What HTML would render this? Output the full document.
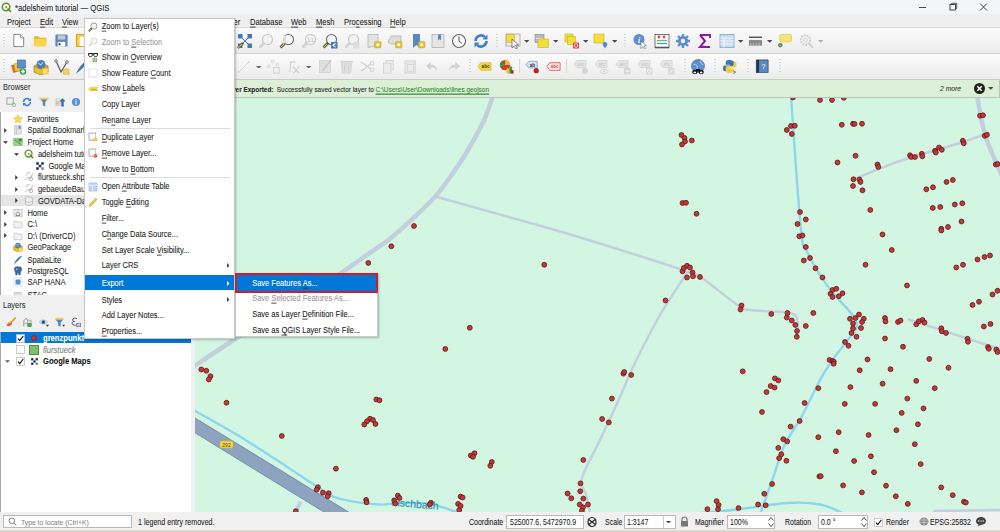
<!DOCTYPE html><html><head><meta charset="utf-8"><style>
html,body{margin:0;padding:0;width:1000px;height:532px;overflow:hidden;background:#f0f0f0;font-family:"Liberation Sans", sans-serif;}
body>div,body>svg{position:absolute;}
.t u{text-decoration-thickness:0.5px;text-underline-offset:1px;text-decoration-color:rgba(0,0,0,.6);}
.t{position:absolute;white-space:nowrap;transform:scaleY(1.18);-webkit-text-stroke:0.06px currentColor;}
</style></head><body><div style="left:0px;top:0px;width:1000px;height:14px;background:#f4f5f6"></div>
<div class="t" style="left:15px;top:-1.50px;line-height:20px;font-size:7.7px;color:#222;">*adelsheim tutorial — QGIS</div>
<div style="left:0px;top:14px;width:1000px;height:13px;background:#efefef"></div>
<div style="left:0px;top:27px;width:1000px;height:1px;background:#d9d9d9"></div>
<div class="t" style="left:7px;top:12.50px;line-height:20px;font-size:7.6px;color:#222;">Project</div>
<div class="t" style="left:40px;top:12.50px;line-height:20px;font-size:7.6px;color:#222;"><u>E</u>dit</div>
<div class="t" style="left:62px;top:12.50px;line-height:20px;font-size:7.6px;color:#222;"><u>V</u>iew</div>
<div class="t" style="left:233.5px;top:12.50px;line-height:20px;font-size:7.6px;color:#222;">er</div>
<div class="t" style="left:250px;top:12.50px;line-height:20px;font-size:7.6px;color:#222;"><u>D</u>atabase</div>
<div class="t" style="left:291px;top:12.50px;line-height:20px;font-size:7.6px;color:#222;"><u>W</u>eb</div>
<div class="t" style="left:316px;top:12.50px;line-height:20px;font-size:7.6px;color:#222;"><u>M</u>esh</div>
<div class="t" style="left:344px;top:12.50px;line-height:20px;font-size:7.6px;color:#222;">Pro<u>c</u>essing</div>
<div class="t" style="left:390px;top:12.50px;line-height:20px;font-size:7.6px;color:#222;"><u>H</u>elp</div>
<div style="left:0px;top:28px;width:1000px;height:25px;background:linear-gradient(#fbfbfb,#ececec)"></div>
<div style="left:0px;top:53px;width:1000px;height:1px;background:#d4d4d4"></div>
<div style="left:0px;top:54px;width:1000px;height:25px;background:linear-gradient(#fbfbfb,#ececec)"></div>
<div style="left:0px;top:79px;width:1000px;height:1px;background:#c8c8c8"></div>
<div style="left:0px;top:80px;width:195px;height:432px;background:#f0f0f0"></div>
<div class="t" style="left:3px;top:77.70px;line-height:20px;font-size:7.5px;color:#333;">Browser</div>
<div style="left:1px;top:112px;width:190px;height:183px;background:#fff"></div>
<div class="t" style="left:3px;top:296.20px;line-height:20px;font-size:7.5px;color:#333;">Layers</div>
<div style="left:1px;top:332px;width:190px;height:180px;background:#fff"></div>
<svg style="left:195px;top:97px" width="805" height="415" viewBox="195 97 805 415"><rect x="195" y="97" width="805" height="415" fill="#d2f6e1"/><path d="M494.0 92.0 C492.5 96.3 489.3 108.3 485.0 118.0 C480.7 127.7 473.5 140.6 468.0 150.0 C462.5 159.4 457.3 166.9 452.0 174.4 C446.7 181.9 442.5 188.3 436.4 195.2 C430.3 202.1 423.2 208.9 415.6 216.0 C408.0 223.1 399.1 231.5 391.0 238.0 C382.9 244.5 374.8 249.3 366.7 255.0 C358.6 260.7 355.0 263.9 342.2 272.2 C329.4 280.5 307.4 294.1 290.0 305.0 C272.6 315.9 254.2 326.8 237.5 337.5 C220.8 348.2 197.9 363.8 190.0 369.0" fill="none" stroke="#c3cfdd" stroke-width="4.5" stroke-linecap="round"/><path d="M977.0 95.0 C977.5 97.8 978.7 105.3 980.0 112.0 C981.3 118.7 982.5 127.0 985.0 135.0 C987.5 143.0 992.0 152.8 995.0 160.0 C998.0 167.2 1001.7 175.0 1003.0 178.0" fill="none" stroke="#c3cfdd" stroke-width="4.5" stroke-linecap="round"/><path d="M437.0 197.0 C456.7 202.5 522.0 220.4 555.0 230.0 C588.0 239.6 613.2 247.7 635.0 254.5 C656.8 261.3 677.5 268.2 686.0 271.0" fill="none" stroke="#c3cfdd" stroke-width="2.4" stroke-linecap="round"/><path d="M687.0 273.0 C682.5 280.0 668.7 300.0 660.0 315.0 C651.3 330.0 641.7 349.3 635.0 363.0 C628.3 376.7 625.8 384.2 620.0 397.0 C614.2 409.8 606.3 426.5 600.0 440.0 C593.7 453.5 584.3 468.8 582.0 478.0 C579.7 487.2 584.7 489.3 586.0 495.0 C587.3 500.7 589.3 509.2 590.0 512.0" fill="none" stroke="#c3cfdd" stroke-width="2.4" stroke-linecap="round"/><path d="M688.0 272.0 C690.3 273.0 693.8 272.5 702.0 278.0 C710.2 283.5 729.5 299.7 737.5 305.0 C745.5 310.3 741.2 308.7 750.0 310.0 C758.8 311.3 782.1 311.2 790.0 313.0 C797.9 314.8 796.3 317.2 797.5 321.0 C798.7 324.8 797.1 333.5 797.0 336.0" fill="none" stroke="#c3cfdd" stroke-width="2.4" stroke-linecap="round"/><path d="M857.0 178.0 C864.2 175.2 882.8 166.8 900.0 161.0 C917.2 155.2 945.8 147.5 960.0 143.0 C974.2 138.5 980.8 135.5 985.0 134.0" fill="none" stroke="#c3cfdd" stroke-width="2.4" stroke-linecap="round"/><path d="M908.8 319.5 C923.2 324.2 979.3 342.6 995.0 347.5 C1010.7 352.4 1001.7 348.8 1003.0 349.0" fill="none" stroke="#c3cfdd" stroke-width="2.4" stroke-linecap="round"/><path d="M934.5 511.0 C945.4 510.8 989.1 510.2 1000.0 510.0" fill="none" stroke="#c3cfdd" stroke-width="2.4" stroke-linecap="round"/><path d="M300.6 501.6 L295 514" fill="none" stroke="#c3cfdd" stroke-width="4"/><path d="M791.0 97.0 C792.7 119.2 798.2 204.1 801.0 230.0 C803.8 255.9 804.3 245.0 807.5 252.5 C810.7 260.0 815.8 268.3 820.0 275.0 C824.2 281.7 827.1 285.8 832.5 292.5 C837.9 299.2 848.4 309.2 852.5 315.0 C856.6 320.8 857.4 323.3 857.0 327.0 C856.6 330.7 854.1 331.5 850.0 337.0 C845.9 342.5 837.5 352.8 832.5 360.0 C827.5 367.2 825.1 370.7 820.0 380.0 C814.9 389.3 807.8 405.3 802.0 416.0 C796.2 426.7 789.7 434.2 785.0 444.0 C780.3 453.8 777.7 464.7 774.0 475.0 C770.3 485.3 765.3 499.5 763.0 506.0 C760.7 512.5 760.5 512.7 760.0 514.0" fill="none" stroke="#8ad6ee" stroke-width="2.3" stroke-linecap="round"/><path d="M188.0 406.8 C189.2 407.5 186.4 406.0 195.5 411.2 C204.6 416.4 227.3 428.9 242.6 438.2 C257.9 447.5 275.3 459.2 287.4 467.1 C299.5 475.0 307.4 480.6 315.0 485.5 C322.6 490.4 327.2 493.9 333.3 496.5 C339.4 499.1 343.9 500.0 351.7 501.3 C359.5 502.6 372.1 504.2 380.0 504.5 C387.9 504.8 390.7 503.1 399.0 503.0 C407.3 502.9 420.5 502.5 430.0 504.0 C439.5 505.5 449.3 509.7 456.0 512.0 C462.7 514.3 467.7 517.0 470.0 518.0" fill="none" stroke="#8ad6ee" stroke-width="2.3" stroke-linecap="round"/><path d="M690.0 514.0 C697.0 513.3 715.7 511.8 732.0 510.0 C748.3 508.2 773.3 503.9 788.0 503.0 C802.7 502.1 810.5 502.7 820.0 504.5 C829.5 506.3 840.8 512.4 845.0 514.0" fill="none" stroke="#8ad6ee" stroke-width="2.3" stroke-linecap="round"/><path d="M180 416.2 L370 532.7" fill="none" stroke="#7189aa" stroke-width="13.6"/><path d="M180 416.2 L370 532.7" fill="none" stroke="#8ea3c0" stroke-width="12.2"/><rect x="220" y="441" width="13" height="7" rx="1.5" fill="#f3d54a" stroke="#d9b52a" stroke-width="0.6"/><text x="226.5" y="446.6" font-size="5" text-anchor="middle" fill="#5a4a10" font-family="Liberation Sans">292</text><text x="391" y="505.5" font-size="10.4" fill="#2b93b8" stroke="#2b93b8" stroke-width="0.2" font-family="Liberation Sans" transform="rotate(5 391 505.5)">Fischbach</text><circle cx="414" cy="226" r="2.45" fill="#c23838" stroke="#5e1616" stroke-width="0.8"/><circle cx="681.5" cy="135" r="2.45" fill="#c23838" stroke="#5e1616" stroke-width="0.8"/><circle cx="684.5" cy="138" r="2.45" fill="#c23838" stroke="#5e1616" stroke-width="0.8"/><circle cx="685" cy="141.5" r="2.45" fill="#c23838" stroke="#5e1616" stroke-width="0.8"/><circle cx="682" cy="144.5" r="2.45" fill="#c23838" stroke="#5e1616" stroke-width="0.8"/><circle cx="691.8" cy="140.5" r="2.45" fill="#c23838" stroke="#5e1616" stroke-width="0.8"/><circle cx="793" cy="97.5" r="2.45" fill="#c23838" stroke="#5e1616" stroke-width="0.8"/><circle cx="820" cy="100" r="2.45" fill="#c23838" stroke="#5e1616" stroke-width="0.8"/><circle cx="832" cy="100" r="2.45" fill="#c23838" stroke="#5e1616" stroke-width="0.8"/><circle cx="786.8" cy="130" r="2.45" fill="#c23838" stroke="#5e1616" stroke-width="0.8"/><circle cx="791" cy="126" r="2.45" fill="#c23838" stroke="#5e1616" stroke-width="0.8"/><circle cx="794.8" cy="125.8" r="2.45" fill="#c23838" stroke="#5e1616" stroke-width="0.8"/><circle cx="791.8" cy="134" r="2.45" fill="#c23838" stroke="#5e1616" stroke-width="0.8"/><circle cx="682.5" cy="203" r="2.45" fill="#c23838" stroke="#5e1616" stroke-width="0.8"/><circle cx="686" cy="202.8" r="2.45" fill="#c23838" stroke="#5e1616" stroke-width="0.8"/><circle cx="696.5" cy="213.8" r="2.45" fill="#c23838" stroke="#5e1616" stroke-width="0.8"/><circle cx="800" cy="212" r="2.45" fill="#c23838" stroke="#5e1616" stroke-width="0.8"/><circle cx="805.8" cy="219.5" r="2.45" fill="#c23838" stroke="#5e1616" stroke-width="0.8"/><circle cx="797.5" cy="224" r="2.45" fill="#c23838" stroke="#5e1616" stroke-width="0.8"/><circle cx="843.8" cy="97.8" r="2.45" fill="#c23838" stroke="#5e1616" stroke-width="0.8"/><circle cx="841.8" cy="124.8" r="2.45" fill="#c23838" stroke="#5e1616" stroke-width="0.8"/><circle cx="853" cy="123.8" r="2.45" fill="#c23838" stroke="#5e1616" stroke-width="0.8"/><circle cx="854.5" cy="124" r="2.45" fill="#c23838" stroke="#5e1616" stroke-width="0.8"/><circle cx="862" cy="123.8" r="2.45" fill="#c23838" stroke="#5e1616" stroke-width="0.8"/><circle cx="855.5" cy="155.8" r="2.45" fill="#c23838" stroke="#5e1616" stroke-width="0.8"/><circle cx="837.5" cy="162.5" r="2.45" fill="#c23838" stroke="#5e1616" stroke-width="0.8"/><circle cx="877.5" cy="164.5" r="2.45" fill="#c23838" stroke="#5e1616" stroke-width="0.8"/><circle cx="878.3" cy="167" r="2.45" fill="#c23838" stroke="#5e1616" stroke-width="0.8"/><circle cx="910" cy="155.3" r="2.45" fill="#c23838" stroke="#5e1616" stroke-width="0.8"/><circle cx="911.3" cy="157" r="2.45" fill="#c23838" stroke="#5e1616" stroke-width="0.8"/><circle cx="915" cy="157" r="2.45" fill="#c23838" stroke="#5e1616" stroke-width="0.8"/><circle cx="921.8" cy="153.8" r="2.45" fill="#c23838" stroke="#5e1616" stroke-width="0.8"/><circle cx="922.3" cy="156.3" r="2.45" fill="#c23838" stroke="#5e1616" stroke-width="0.8"/><circle cx="935" cy="150.8" r="2.45" fill="#c23838" stroke="#5e1616" stroke-width="0.8"/><circle cx="935.8" cy="152.5" r="2.45" fill="#c23838" stroke="#5e1616" stroke-width="0.8"/><circle cx="939" cy="147.5" r="2.45" fill="#c23838" stroke="#5e1616" stroke-width="0.8"/><circle cx="941.8" cy="149.8" r="2.45" fill="#c23838" stroke="#5e1616" stroke-width="0.8"/><circle cx="962.8" cy="140.8" r="2.45" fill="#c23838" stroke="#5e1616" stroke-width="0.8"/><circle cx="963.8" cy="143.3" r="2.45" fill="#c23838" stroke="#5e1616" stroke-width="0.8"/><circle cx="980" cy="115.8" r="2.45" fill="#c23838" stroke="#5e1616" stroke-width="0.8"/><circle cx="983" cy="115.3" r="2.45" fill="#c23838" stroke="#5e1616" stroke-width="0.8"/><circle cx="984.8" cy="135.8" r="2.45" fill="#c23838" stroke="#5e1616" stroke-width="0.8"/><circle cx="987" cy="134.8" r="2.45" fill="#c23838" stroke="#5e1616" stroke-width="0.8"/><circle cx="995.8" cy="164.5" r="2.45" fill="#c23838" stroke="#5e1616" stroke-width="0.8"/><circle cx="997.5" cy="164" r="2.45" fill="#c23838" stroke="#5e1616" stroke-width="0.8"/><circle cx="853.5" cy="179.3" r="2.45" fill="#c23838" stroke="#5e1616" stroke-width="0.8"/><circle cx="859.5" cy="179.5" r="2.45" fill="#c23838" stroke="#5e1616" stroke-width="0.8"/><circle cx="860.5" cy="182" r="2.45" fill="#c23838" stroke="#5e1616" stroke-width="0.8"/><circle cx="853" cy="186" r="2.45" fill="#c23838" stroke="#5e1616" stroke-width="0.8"/><circle cx="862.5" cy="190.3" r="2.45" fill="#c23838" stroke="#5e1616" stroke-width="0.8"/><circle cx="870.3" cy="210" r="2.45" fill="#c23838" stroke="#5e1616" stroke-width="0.8"/><circle cx="926.3" cy="189.3" r="2.45" fill="#c23838" stroke="#5e1616" stroke-width="0.8"/><circle cx="933" cy="187.3" r="2.45" fill="#c23838" stroke="#5e1616" stroke-width="0.8"/><circle cx="946.5" cy="182" r="2.45" fill="#c23838" stroke="#5e1616" stroke-width="0.8"/><circle cx="952.8" cy="180" r="2.45" fill="#c23838" stroke="#5e1616" stroke-width="0.8"/><circle cx="932.8" cy="208" r="2.45" fill="#c23838" stroke="#5e1616" stroke-width="0.8"/><circle cx="940.3" cy="207" r="2.45" fill="#c23838" stroke="#5e1616" stroke-width="0.8"/><circle cx="954.8" cy="204.5" r="2.45" fill="#c23838" stroke="#5e1616" stroke-width="0.8"/><circle cx="962.3" cy="203.3" r="2.45" fill="#c23838" stroke="#5e1616" stroke-width="0.8"/><circle cx="961.5" cy="221.5" r="2.45" fill="#c23838" stroke="#5e1616" stroke-width="0.8"/><circle cx="941.3" cy="228.8" r="2.45" fill="#c23838" stroke="#5e1616" stroke-width="0.8"/><circle cx="948" cy="227" r="2.45" fill="#c23838" stroke="#5e1616" stroke-width="0.8"/><circle cx="391.3" cy="246.3" r="2.45" fill="#c23838" stroke="#5e1616" stroke-width="0.8"/><circle cx="368.3" cy="263" r="2.45" fill="#c23838" stroke="#5e1616" stroke-width="0.8"/><circle cx="201.3" cy="369.5" r="2.45" fill="#c23838" stroke="#5e1616" stroke-width="0.8"/><circle cx="206.3" cy="370.8" r="2.45" fill="#c23838" stroke="#5e1616" stroke-width="0.8"/><circle cx="210.5" cy="376.3" r="2.45" fill="#c23838" stroke="#5e1616" stroke-width="0.8"/><circle cx="208.8" cy="379.5" r="2.45" fill="#c23838" stroke="#5e1616" stroke-width="0.8"/><circle cx="226.5" cy="402.8" r="2.45" fill="#c23838" stroke="#5e1616" stroke-width="0.8"/><circle cx="281.8" cy="436" r="2.45" fill="#c23838" stroke="#5e1616" stroke-width="0.8"/><circle cx="376.3" cy="399.5" r="2.45" fill="#c23838" stroke="#5e1616" stroke-width="0.8"/><circle cx="379.5" cy="400.3" r="2.45" fill="#c23838" stroke="#5e1616" stroke-width="0.8"/><circle cx="370" cy="418.8" r="2.45" fill="#c23838" stroke="#5e1616" stroke-width="0.8"/><circle cx="367" cy="421.3" r="2.45" fill="#c23838" stroke="#5e1616" stroke-width="0.8"/><circle cx="364.3" cy="424.5" r="2.45" fill="#c23838" stroke="#5e1616" stroke-width="0.8"/><circle cx="373" cy="420" r="2.45" fill="#c23838" stroke="#5e1616" stroke-width="0.8"/><circle cx="375.5" cy="424" r="2.45" fill="#c23838" stroke="#5e1616" stroke-width="0.8"/><circle cx="445.3" cy="349" r="2.45" fill="#c23838" stroke="#5e1616" stroke-width="0.8"/><circle cx="470.8" cy="455.5" r="2.45" fill="#c23838" stroke="#5e1616" stroke-width="0.8"/><circle cx="474.5" cy="453.3" r="2.45" fill="#c23838" stroke="#5e1616" stroke-width="0.8"/><circle cx="473" cy="456.8" r="2.45" fill="#c23838" stroke="#5e1616" stroke-width="0.8"/><circle cx="491.8" cy="462" r="2.45" fill="#c23838" stroke="#5e1616" stroke-width="0.8"/><circle cx="583.3" cy="460" r="2.45" fill="#c23838" stroke="#5e1616" stroke-width="0.8"/><circle cx="544.3" cy="264.8" r="2.45" fill="#c23838" stroke="#5e1616" stroke-width="0.8"/><circle cx="469.8" cy="327.8" r="2.45" fill="#c23838" stroke="#5e1616" stroke-width="0.8"/><circle cx="799.3" cy="236.3" r="2.45" fill="#c23838" stroke="#5e1616" stroke-width="0.8"/><circle cx="802.5" cy="235.5" r="2.45" fill="#c23838" stroke="#5e1616" stroke-width="0.8"/><circle cx="805.8" cy="247" r="2.45" fill="#c23838" stroke="#5e1616" stroke-width="0.8"/><circle cx="810" cy="258" r="2.45" fill="#c23838" stroke="#5e1616" stroke-width="0.8"/><circle cx="803.8" cy="260.5" r="2.45" fill="#c23838" stroke="#5e1616" stroke-width="0.8"/><circle cx="815.5" cy="268.3" r="2.45" fill="#c23838" stroke="#5e1616" stroke-width="0.8"/><circle cx="822.5" cy="277.5" r="2.45" fill="#c23838" stroke="#5e1616" stroke-width="0.8"/><circle cx="832.5" cy="290" r="2.45" fill="#c23838" stroke="#5e1616" stroke-width="0.8"/><circle cx="830.5" cy="293.8" r="2.45" fill="#c23838" stroke="#5e1616" stroke-width="0.8"/><circle cx="832.5" cy="297" r="2.45" fill="#c23838" stroke="#5e1616" stroke-width="0.8"/><circle cx="682.5" cy="271.3" r="2.45" fill="#c23838" stroke="#5e1616" stroke-width="0.8"/><circle cx="683.8" cy="268" r="2.45" fill="#c23838" stroke="#5e1616" stroke-width="0.8"/><circle cx="687" cy="265.8" r="2.45" fill="#c23838" stroke="#5e1616" stroke-width="0.8"/><circle cx="690" cy="267.5" r="2.45" fill="#c23838" stroke="#5e1616" stroke-width="0.8"/><circle cx="692.5" cy="272.5" r="2.45" fill="#c23838" stroke="#5e1616" stroke-width="0.8"/><circle cx="693" cy="276.3" r="2.45" fill="#c23838" stroke="#5e1616" stroke-width="0.8"/><circle cx="687" cy="277.5" r="2.45" fill="#c23838" stroke="#5e1616" stroke-width="0.8"/><circle cx="700" cy="277" r="2.45" fill="#c23838" stroke="#5e1616" stroke-width="0.8"/><circle cx="665.5" cy="300.5" r="2.45" fill="#c23838" stroke="#5e1616" stroke-width="0.8"/><circle cx="741.5" cy="305.5" r="2.45" fill="#c23838" stroke="#5e1616" stroke-width="0.8"/><circle cx="740.5" cy="309.5" r="2.45" fill="#c23838" stroke="#5e1616" stroke-width="0.8"/><circle cx="771.3" cy="314" r="2.45" fill="#c23838" stroke="#5e1616" stroke-width="0.8"/><circle cx="787.5" cy="313" r="2.45" fill="#c23838" stroke="#5e1616" stroke-width="0.8"/><circle cx="786.8" cy="317.5" r="2.45" fill="#c23838" stroke="#5e1616" stroke-width="0.8"/><circle cx="791.8" cy="320.5" r="2.45" fill="#c23838" stroke="#5e1616" stroke-width="0.8"/><circle cx="795.3" cy="325" r="2.45" fill="#c23838" stroke="#5e1616" stroke-width="0.8"/><circle cx="797" cy="331" r="2.45" fill="#c23838" stroke="#5e1616" stroke-width="0.8"/><circle cx="796.8" cy="336.8" r="2.45" fill="#c23838" stroke="#5e1616" stroke-width="0.8"/><circle cx="813.3" cy="313" r="2.45" fill="#c23838" stroke="#5e1616" stroke-width="0.8"/><circle cx="805.8" cy="326" r="2.45" fill="#c23838" stroke="#5e1616" stroke-width="0.8"/><circle cx="829.5" cy="360" r="2.45" fill="#c23838" stroke="#5e1616" stroke-width="0.8"/><circle cx="832.5" cy="361" r="2.45" fill="#c23838" stroke="#5e1616" stroke-width="0.8"/><circle cx="836.3" cy="288.8" r="2.45" fill="#c23838" stroke="#5e1616" stroke-width="0.8"/><circle cx="838.8" cy="296.3" r="2.45" fill="#c23838" stroke="#5e1616" stroke-width="0.8"/><circle cx="842.5" cy="293.3" r="2.45" fill="#c23838" stroke="#5e1616" stroke-width="0.8"/><circle cx="882.5" cy="234.5" r="2.45" fill="#c23838" stroke="#5e1616" stroke-width="0.8"/><circle cx="891.8" cy="250" r="2.45" fill="#c23838" stroke="#5e1616" stroke-width="0.8"/><circle cx="865.5" cy="264.8" r="2.45" fill="#c23838" stroke="#5e1616" stroke-width="0.8"/><circle cx="941.3" cy="230.5" r="2.45" fill="#c23838" stroke="#5e1616" stroke-width="0.8"/><circle cx="956.3" cy="267.5" r="2.45" fill="#c23838" stroke="#5e1616" stroke-width="0.8"/><circle cx="963" cy="264.8" r="2.45" fill="#c23838" stroke="#5e1616" stroke-width="0.8"/><circle cx="977.5" cy="259.5" r="2.45" fill="#c23838" stroke="#5e1616" stroke-width="0.8"/><circle cx="984.5" cy="257" r="2.45" fill="#c23838" stroke="#5e1616" stroke-width="0.8"/><circle cx="990" cy="255.5" r="2.45" fill="#c23838" stroke="#5e1616" stroke-width="0.8"/><circle cx="907" cy="285.5" r="2.45" fill="#c23838" stroke="#5e1616" stroke-width="0.8"/><circle cx="992.5" cy="294.5" r="2.45" fill="#c23838" stroke="#5e1616" stroke-width="0.8"/><circle cx="997.5" cy="290.8" r="2.45" fill="#c23838" stroke="#5e1616" stroke-width="0.8"/><circle cx="972.5" cy="305" r="2.45" fill="#c23838" stroke="#5e1616" stroke-width="0.8"/><circle cx="979" cy="301.8" r="2.45" fill="#c23838" stroke="#5e1616" stroke-width="0.8"/><circle cx="850" cy="318.8" r="2.45" fill="#c23838" stroke="#5e1616" stroke-width="0.8"/><circle cx="855.5" cy="318" r="2.45" fill="#c23838" stroke="#5e1616" stroke-width="0.8"/><circle cx="859" cy="314.5" r="2.45" fill="#c23838" stroke="#5e1616" stroke-width="0.8"/><circle cx="863.8" cy="318.8" r="2.45" fill="#c23838" stroke="#5e1616" stroke-width="0.8"/><circle cx="862" cy="322" r="2.45" fill="#c23838" stroke="#5e1616" stroke-width="0.8"/><circle cx="853" cy="323.5" r="2.45" fill="#c23838" stroke="#5e1616" stroke-width="0.8"/><circle cx="861" cy="328" r="2.45" fill="#c23838" stroke="#5e1616" stroke-width="0.8"/><circle cx="853" cy="328.3" r="2.45" fill="#c23838" stroke="#5e1616" stroke-width="0.8"/><circle cx="851.5" cy="333" r="2.45" fill="#c23838" stroke="#5e1616" stroke-width="0.8"/><circle cx="856.5" cy="336.8" r="2.45" fill="#c23838" stroke="#5e1616" stroke-width="0.8"/><circle cx="845" cy="342" r="2.45" fill="#c23838" stroke="#5e1616" stroke-width="0.8"/><circle cx="848.5" cy="345.8" r="2.45" fill="#c23838" stroke="#5e1616" stroke-width="0.8"/><circle cx="885" cy="318" r="2.45" fill="#c23838" stroke="#5e1616" stroke-width="0.8"/><circle cx="885.5" cy="321.5" r="2.45" fill="#c23838" stroke="#5e1616" stroke-width="0.8"/><circle cx="898" cy="322" r="2.45" fill="#c23838" stroke="#5e1616" stroke-width="0.8"/><circle cx="900.5" cy="320.5" r="2.45" fill="#c23838" stroke="#5e1616" stroke-width="0.8"/><circle cx="916.3" cy="324.3" r="2.45" fill="#c23838" stroke="#5e1616" stroke-width="0.8"/><circle cx="918.8" cy="321.3" r="2.45" fill="#c23838" stroke="#5e1616" stroke-width="0.8"/><circle cx="922.5" cy="320" r="2.45" fill="#c23838" stroke="#5e1616" stroke-width="0.8"/><circle cx="924.5" cy="322.5" r="2.45" fill="#c23838" stroke="#5e1616" stroke-width="0.8"/><circle cx="941.3" cy="328.3" r="2.45" fill="#c23838" stroke="#5e1616" stroke-width="0.8"/><circle cx="941.8" cy="331.3" r="2.45" fill="#c23838" stroke="#5e1616" stroke-width="0.8"/><circle cx="946" cy="333" r="2.45" fill="#c23838" stroke="#5e1616" stroke-width="0.8"/><circle cx="967.5" cy="338.8" r="2.45" fill="#c23838" stroke="#5e1616" stroke-width="0.8"/><circle cx="968" cy="341.8" r="2.45" fill="#c23838" stroke="#5e1616" stroke-width="0.8"/><circle cx="983.8" cy="326.5" r="2.45" fill="#c23838" stroke="#5e1616" stroke-width="0.8"/><circle cx="990.5" cy="324" r="2.45" fill="#c23838" stroke="#5e1616" stroke-width="0.8"/><circle cx="988" cy="347" r="2.45" fill="#c23838" stroke="#5e1616" stroke-width="0.8"/><circle cx="988.8" cy="348.8" r="2.45" fill="#c23838" stroke="#5e1616" stroke-width="0.8"/><circle cx="996.3" cy="349.5" r="2.45" fill="#c23838" stroke="#5e1616" stroke-width="0.8"/><circle cx="997.5" cy="352" r="2.45" fill="#c23838" stroke="#5e1616" stroke-width="0.8"/><circle cx="885" cy="338.5" r="2.45" fill="#c23838" stroke="#5e1616" stroke-width="0.8"/><circle cx="903" cy="346.8" r="2.45" fill="#c23838" stroke="#5e1616" stroke-width="0.8"/><circle cx="867.5" cy="359.5" r="2.45" fill="#c23838" stroke="#5e1616" stroke-width="0.8"/><circle cx="929.3" cy="359" r="2.45" fill="#c23838" stroke="#5e1616" stroke-width="0.8"/><circle cx="833.8" cy="361.8" r="2.45" fill="#c23838" stroke="#5e1616" stroke-width="0.8"/><circle cx="335.9" cy="468.7" r="2.45" fill="#c23838" stroke="#5e1616" stroke-width="0.8"/><circle cx="317.9" cy="487.2" r="2.45" fill="#c23838" stroke="#5e1616" stroke-width="0.8"/><circle cx="316.7" cy="489.6" r="2.45" fill="#c23838" stroke="#5e1616" stroke-width="0.8"/><circle cx="322.9" cy="492.7" r="2.45" fill="#c23838" stroke="#5e1616" stroke-width="0.8"/><circle cx="328.7" cy="493.2" r="2.45" fill="#c23838" stroke="#5e1616" stroke-width="0.8"/><circle cx="327.7" cy="496.3" r="2.45" fill="#c23838" stroke="#5e1616" stroke-width="0.8"/><circle cx="366.1" cy="499.9" r="2.45" fill="#c23838" stroke="#5e1616" stroke-width="0.8"/><circle cx="366.6" cy="502.3" r="2.45" fill="#c23838" stroke="#5e1616" stroke-width="0.8"/><circle cx="394.2" cy="500.4" r="2.45" fill="#c23838" stroke="#5e1616" stroke-width="0.8"/><circle cx="397.8" cy="495.6" r="2.45" fill="#c23838" stroke="#5e1616" stroke-width="0.8"/><circle cx="399.5" cy="498" r="2.45" fill="#c23838" stroke="#5e1616" stroke-width="0.8"/><circle cx="395.4" cy="503.5" r="2.45" fill="#c23838" stroke="#5e1616" stroke-width="0.8"/><circle cx="430.9" cy="502.8" r="2.45" fill="#c23838" stroke="#5e1616" stroke-width="0.8"/><circle cx="429.7" cy="504.5" r="2.45" fill="#c23838" stroke="#5e1616" stroke-width="0.8"/><circle cx="295.8" cy="511.2" r="2.45" fill="#c23838" stroke="#5e1616" stroke-width="0.8"/><circle cx="611.9" cy="398.6" r="2.45" fill="#c23838" stroke="#5e1616" stroke-width="0.8"/><circle cx="602.1" cy="419" r="2.45" fill="#c23838" stroke="#5e1616" stroke-width="0.8"/><circle cx="608.8" cy="422.4" r="2.45" fill="#c23838" stroke="#5e1616" stroke-width="0.8"/><circle cx="580.5" cy="483.4" r="2.45" fill="#c23838" stroke="#5e1616" stroke-width="0.8"/><circle cx="567.6" cy="493.5" r="2.45" fill="#c23838" stroke="#5e1616" stroke-width="0.8"/><circle cx="571.3" cy="498.3" r="2.45" fill="#c23838" stroke="#5e1616" stroke-width="0.8"/><circle cx="580.2" cy="491.3" r="2.45" fill="#c23838" stroke="#5e1616" stroke-width="0.8"/><circle cx="583.3" cy="498.6" r="2.45" fill="#c23838" stroke="#5e1616" stroke-width="0.8"/><circle cx="579.7" cy="504.5" r="2.45" fill="#c23838" stroke="#5e1616" stroke-width="0.8"/><circle cx="588" cy="504.5" r="2.45" fill="#c23838" stroke="#5e1616" stroke-width="0.8"/><circle cx="583" cy="507.3" r="2.45" fill="#c23838" stroke="#5e1616" stroke-width="0.8"/><circle cx="581.9" cy="510.6" r="2.45" fill="#c23838" stroke="#5e1616" stroke-width="0.8"/><circle cx="490.3" cy="465.8" r="2.45" fill="#c23838" stroke="#5e1616" stroke-width="0.8"/><circle cx="460.6" cy="496.6" r="2.45" fill="#c23838" stroke="#5e1616" stroke-width="0.8"/><circle cx="462.6" cy="497.5" r="2.45" fill="#c23838" stroke="#5e1616" stroke-width="0.8"/><circle cx="458.1" cy="503.9" r="2.45" fill="#c23838" stroke="#5e1616" stroke-width="0.8"/><circle cx="460.6" cy="505.9" r="2.45" fill="#c23838" stroke="#5e1616" stroke-width="0.8"/><circle cx="459.2" cy="510" r="2.45" fill="#c23838" stroke="#5e1616" stroke-width="0.8"/><circle cx="623.4" cy="373.6" r="2.45" fill="#c23838" stroke="#5e1616" stroke-width="0.8"/><circle cx="624.2" cy="372" r="2.45" fill="#c23838" stroke="#5e1616" stroke-width="0.8"/><circle cx="631.2" cy="375" r="2.45" fill="#c23838" stroke="#5e1616" stroke-width="0.8"/><circle cx="742.7" cy="371.4" r="2.45" fill="#c23838" stroke="#5e1616" stroke-width="0.8"/><circle cx="774.9" cy="378.4" r="2.45" fill="#c23838" stroke="#5e1616" stroke-width="0.8"/><circle cx="778.3" cy="380.4" r="2.45" fill="#c23838" stroke="#5e1616" stroke-width="0.8"/><circle cx="770.7" cy="386" r="2.45" fill="#c23838" stroke="#5e1616" stroke-width="0.8"/><circle cx="774.6" cy="387.6" r="2.45" fill="#c23838" stroke="#5e1616" stroke-width="0.8"/><circle cx="766.5" cy="392.1" r="2.45" fill="#c23838" stroke="#5e1616" stroke-width="0.8"/><circle cx="762" cy="412" r="2.45" fill="#c23838" stroke="#5e1616" stroke-width="0.8"/><circle cx="818.3" cy="388.2" r="2.45" fill="#c23838" stroke="#5e1616" stroke-width="0.8"/><circle cx="804.6" cy="403" r="2.45" fill="#c23838" stroke="#5e1616" stroke-width="0.8"/><circle cx="799.6" cy="421" r="2.45" fill="#c23838" stroke="#5e1616" stroke-width="0.8"/><circle cx="790.6" cy="426.6" r="2.45" fill="#c23838" stroke="#5e1616" stroke-width="0.8"/><circle cx="783.3" cy="439.2" r="2.45" fill="#c23838" stroke="#5e1616" stroke-width="0.8"/><circle cx="787.2" cy="441.4" r="2.45" fill="#c23838" stroke="#5e1616" stroke-width="0.8"/><circle cx="778.3" cy="447.9" r="2.45" fill="#c23838" stroke="#5e1616" stroke-width="0.8"/><circle cx="781.3" cy="454.3" r="2.45" fill="#c23838" stroke="#5e1616" stroke-width="0.8"/><circle cx="779.1" cy="458.2" r="2.45" fill="#c23838" stroke="#5e1616" stroke-width="0.8"/><circle cx="786.4" cy="460.8" r="2.45" fill="#c23838" stroke="#5e1616" stroke-width="0.8"/><circle cx="818.3" cy="437.2" r="2.45" fill="#c23838" stroke="#5e1616" stroke-width="0.8"/><circle cx="819.4" cy="476.4" r="2.45" fill="#c23838" stroke="#5e1616" stroke-width="0.8"/><circle cx="772.1" cy="484" r="2.45" fill="#c23838" stroke="#5e1616" stroke-width="0.8"/><circle cx="764.3" cy="493.8" r="2.45" fill="#c23838" stroke="#5e1616" stroke-width="0.8"/><circle cx="758.1" cy="504.5" r="2.45" fill="#c23838" stroke="#5e1616" stroke-width="0.8"/><circle cx="765.7" cy="505.3" r="2.45" fill="#c23838" stroke="#5e1616" stroke-width="0.8"/><circle cx="738.5" cy="508.1" r="2.45" fill="#c23838" stroke="#5e1616" stroke-width="0.8"/><circle cx="716.6" cy="501.1" r="2.45" fill="#c23838" stroke="#5e1616" stroke-width="0.8"/><circle cx="718.6" cy="505" r="2.45" fill="#c23838" stroke="#5e1616" stroke-width="0.8"/><circle cx="718" cy="509.2" r="2.45" fill="#c23838" stroke="#5e1616" stroke-width="0.8"/><circle cx="707.4" cy="509.2" r="2.45" fill="#c23838" stroke="#5e1616" stroke-width="0.8"/><circle cx="833.6" cy="363.8" r="2.45" fill="#c23838" stroke="#5e1616" stroke-width="0.8"/><circle cx="859.7" cy="370.3" r="2.45" fill="#c23838" stroke="#5e1616" stroke-width="0.8"/><circle cx="890.5" cy="369.2" r="2.45" fill="#c23838" stroke="#5e1616" stroke-width="0.8"/><circle cx="948.5" cy="367.8" r="2.45" fill="#c23838" stroke="#5e1616" stroke-width="0.8"/><circle cx="850.4" cy="387.1" r="2.45" fill="#c23838" stroke="#5e1616" stroke-width="0.8"/><circle cx="882.6" cy="383.7" r="2.45" fill="#c23838" stroke="#5e1616" stroke-width="0.8"/><circle cx="916.2" cy="380.9" r="2.45" fill="#c23838" stroke="#5e1616" stroke-width="0.8"/><circle cx="934.7" cy="388.2" r="2.45" fill="#c23838" stroke="#5e1616" stroke-width="0.8"/><circle cx="844.8" cy="403.9" r="2.45" fill="#c23838" stroke="#5e1616" stroke-width="0.8"/><circle cx="875.1" cy="403.9" r="2.45" fill="#c23838" stroke="#5e1616" stroke-width="0.8"/><circle cx="907.3" cy="398.6" r="2.45" fill="#c23838" stroke="#5e1616" stroke-width="0.8"/><circle cx="923.5" cy="408.4" r="2.45" fill="#c23838" stroke="#5e1616" stroke-width="0.8"/><circle cx="901.7" cy="412.9" r="2.45" fill="#c23838" stroke="#5e1616" stroke-width="0.8"/><circle cx="917.9" cy="424.3" r="2.45" fill="#c23838" stroke="#5e1616" stroke-width="0.8"/><circle cx="838.7" cy="432.2" r="2.45" fill="#c23838" stroke="#5e1616" stroke-width="0.8"/><circle cx="868.6" cy="435" r="2.45" fill="#c23838" stroke="#5e1616" stroke-width="0.8"/><circle cx="896.4" cy="430.2" r="2.45" fill="#c23838" stroke="#5e1616" stroke-width="0.8"/><circle cx="914.8" cy="444.2" r="2.45" fill="#c23838" stroke="#5e1616" stroke-width="0.8"/><circle cx="835.9" cy="451.2" r="2.45" fill="#c23838" stroke="#5e1616" stroke-width="0.8"/><circle cx="870.9" cy="456.3" r="2.45" fill="#c23838" stroke="#5e1616" stroke-width="0.8"/><circle cx="854.1" cy="461" r="2.45" fill="#c23838" stroke="#5e1616" stroke-width="0.8"/><circle cx="920.7" cy="464.1" r="2.45" fill="#c23838" stroke="#5e1616" stroke-width="0.8"/><circle cx="874" cy="472.2" r="2.45" fill="#c23838" stroke="#5e1616" stroke-width="0.8"/><circle cx="820.7" cy="476.2" r="2.45" fill="#c23838" stroke="#5e1616" stroke-width="0.8"/><circle cx="843.1" cy="485.4" r="2.45" fill="#c23838" stroke="#5e1616" stroke-width="0.8"/><circle cx="886" cy="485.7" r="2.45" fill="#c23838" stroke="#5e1616" stroke-width="0.8"/><circle cx="861.9" cy="492.4" r="2.45" fill="#c23838" stroke="#5e1616" stroke-width="0.8"/><circle cx="941.2" cy="487.4" r="2.45" fill="#c23838" stroke="#5e1616" stroke-width="0.8"/><circle cx="952.7" cy="495.2" r="2.45" fill="#c23838" stroke="#5e1616" stroke-width="0.8"/><circle cx="895.8" cy="496.3" r="2.45" fill="#c23838" stroke="#5e1616" stroke-width="0.8"/><circle cx="907.8" cy="503.9" r="2.45" fill="#c23838" stroke="#5e1616" stroke-width="0.8"/><circle cx="963.9" cy="501.7" r="2.45" fill="#c23838" stroke="#5e1616" stroke-width="0.8"/><circle cx="965.8" cy="502.5" r="2.45" fill="#c23838" stroke="#5e1616" stroke-width="0.8"/></svg>
<div style="left:195px;top:79px;width:805px;height:18.6px;background:#dcefd7;border-top:1px solid #c4cfc2;border-bottom:1px solid #b9c7b6;border-right:1.5px solid #b9c4b6;box-sizing:border-box"></div>
<div style="left:0px;top:512px;width:1000px;height:20px;background:#f0f0f0"></div>
<svg style="left:1px;top:2px" width="11" height="11" viewBox="0 0 16 16"><circle cx="7.3" cy="7.3" r="5.5" fill="none" stroke="#589632" stroke-width="2.2"/><path d="M9.5 9.5l5 5" stroke="#589632" stroke-width="2.6"/><circle cx="7.5" cy="7.5" r="1.6" fill="#ee7913"/></svg>
<svg style="left:915px;top:2px" width="80" height="10" viewBox="0 0 80 10"><path d="M4 5.5h7" stroke="#333" stroke-width="0.9"/><rect x="35" y="2.5" width="5.5" height="5.5" fill="none" stroke="#333" stroke-width="0.9"/><path d="M36.5 2.5v-1.2h5.2v5.2h-1.2" fill="none" stroke="#333" stroke-width="0.8"/><path d="M65 1.5l7 7M72 1.5l-7 7" stroke="#333" stroke-width="0.9"/></svg>
<div style="left:3px;top:34px;width:2px;height:14px;background:repeating-linear-gradient(#d6d6d6 0 1px,transparent 1px 3px)"></div>
<svg style="left:11px;top:33px" width="15" height="15" viewBox="0 0 16 16"><path d="M3 1.5h7l3.5 3.5v9.5h-10.5z" fill="#fff" stroke="#777" stroke-width="0.9"/><path d="M10 1.5v3.5h3.5" fill="#eee" stroke="#777" stroke-width="0.8"/></svg>
<svg style="left:33px;top:33px" width="15" height="15" viewBox="0 0 16 16"><path d="M1 3.5h5l1.5 1.5h6.5v9h-13z" fill="#e8b92c"/><path d="M1 6.5h14l-1.2 7.5h-12.8z" fill="#f7d54d"/></svg>
<svg style="left:54px;top:33px" width="15" height="15" viewBox="0 0 16 16"><rect x="1.5" y="1.5" width="13" height="13" rx="1.2" fill="#5a88c4"/><rect x="4" y="2.5" width="8" height="4.5" fill="#c9c9c9"/><rect x="4" y="9.5" width="8" height="5" fill="#fff"/><rect x="5" y="11" width="2" height="2" fill="#222"/></svg>
<svg style="left:75px;top:33px" width="15" height="15" viewBox="0 0 16 16"><rect x="1.5" y="1.5" width="13" height="13" fill="#f2cf44" stroke="#c9a21f" stroke-width="1"/><rect x="5" y="4" width="5" height="10" fill="#fff"/></svg>
<svg style="left:237px;top:33px" width="16" height="16" viewBox="0 0 16 16"><rect x="1" y="1" width="4.5" height="4.5" fill="#3f79c2"/><rect x="10.5" y="1" width="4.5" height="4.5" fill="#3f79c2"/><rect x="10.5" y="10.5" width="4.5" height="4.5" fill="#3f79c2"/><rect x="1" y="10.5" width="4.5" height="4.5" fill="#3f79c2"/><path d="M5 5l6 6M11 5l-6 6" stroke="#3f79c2" stroke-width="1"/><path d="M1 15l5-5" stroke="#222" stroke-width="2.4"/><path d="M1.3 14.7l4-4" stroke="#e5c334" stroke-width="1.3"/></svg>
<svg style="left:258px;top:33px" width="16" height="16" viewBox="0 0 16 16"><circle cx="9.5" cy="6.5" r="5" fill="#f2f2f2" stroke="#c8c8c8" stroke-width="1.1"/><path d="M1.5 14.5l4.5-4.5" stroke="#c8c8c8" stroke-width="2.6"/><path d="M1.8 14.2l3.6-3.6" stroke="#ddd" stroke-width="1.3"/></svg>
<svg style="left:279px;top:33px" width="16" height="16" viewBox="0 0 16 16"><circle cx="9.5" cy="6.5" r="5" fill="#f6f6f6" stroke="#6a6a6a" stroke-width="1.1"/><path d="M1.5 14.5l4.5-4.5" stroke="#333" stroke-width="2.6"/><path d="M1.8 14.2l3.6-3.6" stroke="#e5c334" stroke-width="1.3"/><rect x="4" y="2.5" width="3" height="8" fill="#ddd"/></svg>
<svg style="left:300.5px;top:33px" width="16" height="16" viewBox="0 0 16 16"><circle cx="9.5" cy="6.5" r="5" fill="#f2f2f2" stroke="#c8c8c8" stroke-width="1.1"/><path d="M1.5 14.5l4.5-4.5" stroke="#c8c8c8" stroke-width="2.6"/><path d="M1.8 14.2l3.6-3.6" stroke="#ddd" stroke-width="1.3"/><text x="9.5" y="8.5" font-size="5" fill="#bbb" text-anchor="middle" font-family="Liberation Sans">1:1</text></svg>
<svg style="left:321.5px;top:33px" width="16" height="16" viewBox="0 0 16 16"><circle cx="9.5" cy="6.5" r="5" fill="#f6f6f6" stroke="#6a6a6a" stroke-width="1.1"/><path d="M1.5 14.5l4.5-4.5" stroke="#333" stroke-width="2.6"/><path d="M1.8 14.2l3.6-3.6" stroke="#e5c334" stroke-width="1.3"/><rect x="9" y="9" width="6.5" height="6.5" fill="#3f79c2"/><path d="M13.5 10.3l-2.5 1.9 2.5 1.9" stroke="#fff" stroke-width="1.1" fill="none"/></svg>
<svg style="left:343.5px;top:33px" width="16" height="16" viewBox="0 0 16 16"><circle cx="9.5" cy="6.5" r="5" fill="#f2f2f2" stroke="#c8c8c8" stroke-width="1.1"/><path d="M1.5 14.5l4.5-4.5" stroke="#c8c8c8" stroke-width="2.6"/><path d="M1.8 14.2l3.6-3.6" stroke="#ddd" stroke-width="1.3"/><rect x="9" y="9" width="6.5" height="6.5" fill="#ddd"/></svg>
<svg style="left:365.5px;top:33px" width="16" height="16" viewBox="0 0 16 16"><path d="M2 1.5h10v11l-10 2z" fill="#e3e3e3" stroke="#aaa" stroke-width="0.7"/><rect x="8.5" y="8.5" width="6.5" height="6.5" rx="1" fill="#e6c42f" stroke="#c9a11a" stroke-width="0.5"/><circle cx="11.75" cy="11.75" r="1.5" fill="#fff"/></svg>
<svg style="left:387px;top:33px" width="16" height="16" viewBox="0 0 16 16"><path d="M1 9l3-6h10v8h-10z" fill="#dedede" stroke="#aaa" stroke-width="0.7"/><rect x="8.5" y="8.5" width="6.5" height="6.5" rx="1" fill="#e6c42f" stroke="#c9a11a" stroke-width="0.5"/><circle cx="11.75" cy="11.75" r="1.5" fill="#fff"/></svg>
<svg style="left:410px;top:33px" width="16" height="16" viewBox="0 0 16 16"><path d="M3 1h7v14l-3.5-3-3.5 3z" fill="#5a88c4"/><rect x="8.5" y="8.5" width="6.5" height="6.5" rx="1" fill="#e6c42f" stroke="#c9a11a" stroke-width="0.5"/><circle cx="11.75" cy="11.75" r="1.5" fill="#fff"/></svg>
<svg style="left:430px;top:33px" width="16" height="16" viewBox="0 0 16 16"><rect x="2" y="1.5" width="12" height="13" fill="#e5e5e5" stroke="#aaa" stroke-width="0.7"/><path d="M8 1.5h3v6l-1.5-1.5-1.5 1.5z" fill="#5a88c4"/></svg>
<svg style="left:451px;top:33px" width="16" height="16" viewBox="0 0 16 16"><circle cx="8" cy="8" r="6.5" fill="#fafafa" stroke="#666" stroke-width="1.1"/><path d="M8 3.5v4.5l3 2.5" stroke="#555" stroke-width="1" fill="none"/></svg>
<svg style="left:473px;top:33px" width="16" height="16" viewBox="0 0 16 16"><path d="M2.5 8a5.5 5.5 0 0 1 9.5-3.8" fill="none" stroke="#3b7fcf" stroke-width="2.6"/><path d="M14.5 1.5v5h-5z" fill="#3b7fcf"/><path d="M13.5 8a5.5 5.5 0 0 1-9.5 3.8" fill="none" stroke="#3b7fcf" stroke-width="2.6"/><path d="M1.5 14.5v-5h5z" fill="#3b7fcf"/></svg>
<div style="left:496px;top:34px;width:2px;height:14px;background:repeating-linear-gradient(#d6d6d6 0 1px,transparent 1px 3px)"></div>
<svg style="left:504.5px;top:33px" width="16" height="16" viewBox="0 0 16 16"><rect x="1" y="1" width="14" height="12" fill="#eee" stroke="#999" stroke-width="0.7"/><rect x="1.5" y="1.5" width="8" height="8" fill="#f2df3a" stroke="#b8a62a" stroke-width="0.5"/><path d="M7 6l0 9 2-2 2 3 1.5-1-2-3 3 0z" fill="#fff" stroke="#555" stroke-width="0.7"/></svg>
<svg style="left:524.0999999999999px;top:40.15px" width="5.4" height="2.7" viewBox="0 0 6 3"><path d="M0 0h6l-3 3z" fill="#4a4a4a"/></svg>
<svg style="left:534px;top:33px" width="16" height="16" viewBox="0 0 16 16"><rect x="1" y="1.5" width="9" height="8" fill="#bbb" stroke="#888" stroke-width="0.6"/><path d="M2 5.5h7" stroke="#eee" stroke-width="0.8"/><rect x="4" y="6" width="10.5" height="8.5" fill="#f2df3a" stroke="#c9b02a" stroke-width="0.6"/></svg>
<svg style="left:553.0999999999999px;top:40.15px" width="5.4" height="2.7" viewBox="0 0 6 3"><path d="M0 0h6l-3 3z" fill="#4a4a4a"/></svg>
<svg style="left:563.5px;top:33px" width="16" height="16" viewBox="0 0 16 16"><rect x="1" y="1" width="8" height="8" fill="#f2df3a" stroke="#c9b02a" stroke-width="0.6"/><rect x="3.5" y="3.5" width="8" height="8" fill="#f2df3a" stroke="#c9b02a" stroke-width="0.6"/><rect x="9" y="9.5" width="6" height="6" rx="1" fill="#e04040"/><circle cx="12" cy="12.5" r="1.8" fill="none" stroke="#fff" stroke-width="0.8"/></svg>
<svg style="left:582.5px;top:40.15px" width="5.4" height="2.7" viewBox="0 0 6 3"><path d="M0 0h6l-3 3z" fill="#4a4a4a"/></svg>
<svg style="left:593px;top:33px" width="16" height="16" viewBox="0 0 16 16"><rect x="1" y="1" width="10" height="9" fill="#f2df3a" stroke="#c9b02a" stroke-width="0.6"/><path d="M12 15.5l-2.3-3.5a2.4 2.4 0 1 1 4.6 0z" fill="#5a8ac0"/></svg>
<svg style="left:611.9px;top:40.15px" width="5.4" height="2.7" viewBox="0 0 6 3"><path d="M0 0h6l-3 3z" fill="#4a4a4a"/></svg>
<div style="left:624px;top:34px;width:2px;height:14px;background:repeating-linear-gradient(#d6d6d6 0 1px,transparent 1px 3px)"></div>
<svg style="left:632px;top:33px" width="16" height="16" viewBox="0 0 16 16"><circle cx="7" cy="6.5" r="5.5" fill="#5b8fd0"/><text x="7" y="9.5" font-size="8" font-style="italic" font-weight="bold" fill="#fff" text-anchor="middle" font-family="Liberation Serif">i</text><path d="M9 8l0 7.5 1.8-1.8 1.8 2.5 1-0.8-1.7-2.5 2.4-0.3z" fill="#fff" stroke="#666" stroke-width="0.6"/></svg>
<svg style="left:654px;top:33px" width="16" height="16" viewBox="0 0 16 16"><rect x="1" y="1.5" width="14" height="13" fill="#fff" stroke="#666" stroke-width="0.9"/><path d="M1 14.5h14" stroke="#555" stroke-width="1.6"/><circle cx="5" cy="4" r="1.4" fill="#d44"/><circle cx="10" cy="4" r="1.4" fill="#d44"/><path d="M3 7.5h10" stroke="#6b6" stroke-width="1.4"/><path d="M3 10.5h10" stroke="#59c" stroke-width="1.4"/></svg>
<svg style="left:675px;top:33px" width="16" height="16" viewBox="0 0 16 16"><circle cx="8" cy="8" r="5" fill="#5b8fd0"/><path d="M8 1v14M1 8h14M3 3l10 10M13 3l-10 10" stroke="#5b8fd0" stroke-width="2.4"/><circle cx="8" cy="8" r="2.2" fill="#f3f3f3"/></svg>
<svg style="left:696.5px;top:33px" width="16" height="16" viewBox="0 0 16 16"><path d="M3 2h10v3M13 14h-10l5-6-5-6" fill="none" stroke="#8c1aa0" stroke-width="2"/></svg>
<svg style="left:719px;top:33px" width="16" height="16" viewBox="0 0 16 16"><rect x="1" y="1.5" width="14" height="13" fill="#c9dbf0" stroke="#7ea3cf" stroke-width="0.8"/><path d="M1 5h14M1 8h14M1 11h14M5 5v9.5" stroke="#fff" stroke-width="0.8"/></svg>
<svg style="left:737.6999999999999px;top:40.15px" width="5.4" height="2.7" viewBox="0 0 6 3"><path d="M0 0h6l-3 3z" fill="#4a4a4a"/></svg>
<svg style="left:747.5px;top:33px" width="15" height="16" viewBox="0 0 16 16"><path d="M1 4h14" stroke="#445" stroke-width="1.4"/><rect x="1" y="7" width="14" height="6" fill="#8a8a8a"/><path d="M3 10v3M6 10v3M9 10v3M12 10v3" stroke="#ddd" stroke-width="0.6"/></svg>
<svg style="left:766.6999999999999px;top:40.15px" width="5.4" height="2.7" viewBox="0 0 6 3"><path d="M0 0h6l-3 3z" fill="#4a4a4a"/></svg>
<svg style="left:777px;top:33px" width="15" height="15" viewBox="0 0 16 16"><rect x="3" y="1.5" width="12.5" height="8" rx="2" fill="#f8e37a" stroke="#d5bb3c" stroke-width="0.6"/><path d="M6 9l-2 4 4-4z" fill="#f8e37a"/><circle cx="3.5" cy="13" r="2" fill="#6a9f6a" stroke="#3f6f3f" stroke-width="0.6"/></svg>
<svg style="left:798.5px;top:33px" width="15" height="16" viewBox="0 0 16 16"><circle cx="7" cy="7" r="5" fill="none" stroke="#d0d0d0" stroke-width="2.2" stroke-dasharray="2 1"/><circle cx="7" cy="7" r="2" fill="none" stroke="#d0d0d0" stroke-width="1"/><path d="M10 10l5 5" stroke="#d0d0d0" stroke-width="2"/></svg>
<svg style="left:817.8px;top:40.15px" width="5.4" height="2.7" viewBox="0 0 6 3"><path d="M0 0h6l-3 3z" fill="#aaa"/></svg>
<div style="left:3px;top:59px;width:2px;height:14px;background:repeating-linear-gradient(#d6d6d6 0 1px,transparent 1px 3px)"></div>
<svg style="left:11px;top:58.5px" width="16" height="16" viewBox="0 0 16 16"><rect x="1" y="5" width="8" height="8" fill="#d9731f" transform="rotate(-15 5 9)"/><rect x="3.5" y="3.5" width="8" height="8" fill="#f2c83a" transform="rotate(-8 7 7)"/><rect x="6.5" y="1" width="8" height="8" fill="#5b8fd0" stroke="#3d6aa8" stroke-width="0.6"/><circle cx="12" cy="12.5" r="3.2" fill="#3e9a5a"/><path d="M12 10.6v3.8M10.1 12.5h3.8" stroke="#fff" stroke-width="1.3"/></svg>
<svg style="left:33px;top:58.5px" width="16" height="16" viewBox="0 0 16 16"><path d="M1 7l7-3 7 3v6l-7 3-7-3z" fill="#e9c12f" stroke="#8a6d10" stroke-width="0.6"/><circle cx="8" cy="5.5" r="4.5" fill="#4d7fc0"/><path d="M5 4l3 2 2-3" stroke="#cde" stroke-width="1" fill="none"/><path d="M1 7l7 3 7-3" fill="none" stroke="#8a6d10" stroke-width="0.6"/><rect x="9.5" y="9.5" width="5.5" height="5.5" fill="#f7dd6a" stroke="#d8b62a" stroke-width="0.6"/></svg>
<svg style="left:54px;top:58.5px" width="16" height="16" viewBox="0 0 16 16"><path d="M2 2l5 11 6-10" fill="none" stroke="#555" stroke-width="1.2"/><circle cx="2" cy="2" r="1.3" fill="#fff" stroke="#555" stroke-width="0.8"/><circle cx="13" cy="3" r="1.3" fill="#fff" stroke="#555" stroke-width="0.8"/><rect x="9.5" y="10" width="5.5" height="5.5" fill="#f2d15a" stroke="#d9b23a" stroke-width="0.6"/></svg>
<svg style="left:74px;top:58.5px" width="16" height="16" viewBox="0 0 16 16"><path d="M15 1C9 3 5 8 2 15c3-3 8-6 12-13z" fill="#4a6fa5"/></svg>
<svg style="left:236.5px;top:58.5px" width="15" height="15" viewBox="0 0 16 16"><path d="M2 14l11-11" stroke="#d5d5d5" stroke-width="1"/><circle cx="2" cy="14" r="1" fill="#d5d5d5"/><circle cx="13" cy="3" r="1" fill="#d5d5d5"/></svg>
<svg style="left:255.90000000000003px;top:65.65px" width="5.4" height="2.7" viewBox="0 0 6 3"><path d="M0 0h6l-3 3z" fill="#666"/></svg>
<svg style="left:266px;top:58.5px" width="15" height="15" viewBox="0 0 16 16"><circle cx="7" cy="2.5" r="1.5" fill="none" stroke="#d0d0d0" stroke-width="0.9"/><circle cx="2.5" cy="8" r="1.5" fill="none" stroke="#d0d0d0" stroke-width="0.9"/><circle cx="12" cy="5.5" r="1.5" fill="none" stroke="#d0d0d0" stroke-width="0.9"/><rect x="8" y="9" width="6" height="6" fill="none" stroke="#d0d0d0" stroke-width="1"/></svg>
<svg style="left:288px;top:58.5px" width="15" height="15" viewBox="0 0 16 16"><path d="M2 3h6M3 3l-1 11M5 8l7 7M12 8l-6 7" stroke="#cfcfcf" stroke-width="1.2" fill="none"/></svg>
<svg style="left:306.3px;top:65.65px" width="5.4" height="2.7" viewBox="0 0 6 3"><path d="M0 0h6l-3 3z" fill="#666"/></svg>
<svg style="left:317.5px;top:58.5px" width="15" height="15" viewBox="0 0 16 16"><rect x="1.5" y="1.5" width="12" height="13" fill="#e2e2e2" stroke="#cfcfcf" stroke-width="0.8"/><path d="M5 13l8-11" stroke="#c4c4c4" stroke-width="1.4"/><path d="M3 5h5M3 8h4M3 11h3" stroke="#d2d2d2" stroke-width="0.7"/></svg>
<svg style="left:338.5px;top:58.5px" width="15" height="15" viewBox="0 0 16 16"><rect x="1.5" y="2" width="13" height="2" fill="#d2d2d2"/><path d="M2.5 5h11l-1 10h-9z" fill="#e0e0e0" stroke="#cdcdcd" stroke-width="0.8"/><path d="M6 7v6M10 7v6" stroke="#cdcdcd" stroke-width="1"/></svg>
<svg style="left:360px;top:58.5px" width="15" height="15" viewBox="0 0 16 16"><path d="M1 3l11 8M1 13l11-8" stroke="#cfcfcf" stroke-width="1.2"/><circle cx="13" cy="11.5" r="2" fill="none" stroke="#cfcfcf" stroke-width="1"/><circle cx="13" cy="4.5" r="2" fill="none" stroke="#cfcfcf" stroke-width="1"/></svg>
<svg style="left:382px;top:58.5px" width="15" height="15" viewBox="0 0 16 16"><rect x="4" y="1.5" width="8" height="10" fill="#ececec" stroke="#d0d0d0" stroke-width="0.8"/><rect x="1.5" y="4.5" width="8" height="10.5" fill="#ececec" stroke="#d0d0d0" stroke-width="0.8"/></svg>
<svg style="left:403px;top:58.5px" width="15" height="15" viewBox="0 0 16 16"><rect x="2" y="2" width="11" height="13" fill="#e8e8e8" stroke="#d0d0d0" stroke-width="0.8"/><rect x="5" y="6" width="6" height="7" fill="#eee" stroke="#ccc" stroke-width="0.7"/></svg>
<svg style="left:424.5px;top:58.5px" width="15" height="15" viewBox="0 0 16 16"><path d="M6 3l-5 4.5 5 4.5v-3c4 0 6 1 7 4 0-5-3-7-7-7z" fill="#d3d3d3"/></svg>
<svg style="left:445.5px;top:58.5px" width="15" height="15" viewBox="0 0 16 16"><path d="M10 3l5 4.5-5 4.5v-3c-4 0-6 1-7 4 0-5 3-7 7-7z" fill="#d3d3d3"/></svg>
<div style="left:469px;top:59px;width:2px;height:14px;background:repeating-linear-gradient(#d6d6d6 0 1px,transparent 1px 3px)"></div>
<svg style="left:476.5px;top:58.5px" width="15" height="15" viewBox="0 0 16 16"><path d="M1 8l3-4h11v8h-11z" fill="#f4da3a" stroke="#c9aa20" stroke-width="0.6"/><text x="9.2" y="10" font-size="5" font-weight="bold" fill="#333" text-anchor="middle" font-family="Liberation Sans">abc</text></svg>
<svg style="left:499px;top:58.5px" width="15" height="15" viewBox="0 0 16 16"><circle cx="6.5" cy="6.5" r="5.5" fill="#d33"/><path d="M6.5 6.5V1A5.5 5.5 0 0 1 12 6.5z" fill="#e7c526"/><path d="M6.5 6.5L1.5 9A5.5 5.5 0 0 1 3 2.5z" fill="#3a9a3a"/><rect x="8" y="10" width="3" height="5.5" fill="#e7c526"/><rect x="11" y="8" width="3" height="7.5" fill="#3a9a3a"/><rect x="13" y="12" width="2.5" height="3.5" fill="#a22"/></svg>
<div style="left:519px;top:59px;width:1px;height:14px;background:#d8d8d8"></div>
<svg style="left:525px;top:58.5px" width="15" height="15" viewBox="0 0 16 16"><path d="M1 6l3-3.5h9v7h-9z" fill="#d4e3f5" stroke="#6d96cc" stroke-width="0.7"/><text x="7.8" y="8" font-size="4.8" font-weight="bold" fill="#333" text-anchor="middle" font-family="Liberation Sans">ab</text><circle cx="12" cy="12.5" r="2.8" fill="#c02020"/></svg>
<svg style="left:545.5px;top:58.5px" width="15" height="15" viewBox="0 0 16 16"><path d="M1 8l3-4h11v8h-11z" fill="#fff0f0" stroke="#e04848" stroke-width="0.9"/><text x="9.2" y="10" font-size="5" font-weight="bold" fill="#e04848" text-anchor="middle" font-family="Liberation Sans">abc</text></svg>
<div style="left:566px;top:59px;width:1px;height:14px;background:#d8d8d8"></div>
<svg style="left:572.5px;top:58.5px" width="16" height="16" viewBox="0 0 16 16"><path d="M1 5l3-3.5h9v7h-9z" fill="#e6e6e6" stroke="#cfcfcf" stroke-width="0.7"/><text x="8" y="7" font-size="4.5" fill="#c5c5c5" text-anchor="middle" font-family="Liberation Sans">abc</text><circle cx="12" cy="12" r="3" fill="#d5d5d5"/></svg>
<svg style="left:593.5px;top:58.5px" width="16" height="16" viewBox="0 0 16 16"><path d="M1 5l3-3.5h9v7h-9z" fill="#e6e6e6" stroke="#cfcfcf" stroke-width="0.7"/><text x="8" y="7" font-size="4.5" fill="#c5c5c5" text-anchor="middle" font-family="Liberation Sans">abc</text><ellipse cx="10" cy="12.5" rx="4" ry="2.2" fill="none" stroke="#cfcfcf" stroke-width="0.8"/><circle cx="10" cy="12.5" r="1" fill="#cfcfcf"/></svg>
<svg style="left:615px;top:58.5px" width="16" height="16" viewBox="0 0 16 16"><path d="M1 5l3-3.5h9v7h-9z" fill="#e6e6e6" stroke="#cfcfcf" stroke-width="0.7"/><text x="8" y="7" font-size="4.5" fill="#c5c5c5" text-anchor="middle" font-family="Liberation Sans">abc</text><rect x="9" y="9" width="6.5" height="6.5" fill="#d8d8d8"/><path d="M10.5 12.2h3M12.5 11l1.2 1.2-1.2 1.2" stroke="#fff" stroke-width="0.8" fill="none"/></svg>
<svg style="left:637px;top:58.5px" width="16" height="16" viewBox="0 0 16 16"><path d="M1 5l3-3.5h9v7h-9z" fill="#e6e6e6" stroke="#cfcfcf" stroke-width="0.7"/><text x="8" y="7" font-size="4.5" fill="#c5c5c5" text-anchor="middle" font-family="Liberation Sans">abc</text><rect x="9" y="9" width="6.5" height="6.5" fill="#d8d8d8"/><circle cx="12.2" cy="12.2" r="1.8" fill="none" stroke="#fff" stroke-width="0.8"/></svg>
<svg style="left:658.5px;top:58.5px" width="16" height="16" viewBox="0 0 16 16"><path d="M1 5l3-3.5h9v7h-9z" fill="#e6e6e6" stroke="#cfcfcf" stroke-width="0.7"/><text x="8" y="7" font-size="4.5" fill="#c5c5c5" text-anchor="middle" font-family="Liberation Sans">abc</text><rect x="9" y="9" width="6.5" height="6.5" fill="#d8d8d8"/><path d="M10.5 14l3.5-3.5" stroke="#fff" stroke-width="0.9"/></svg>
<div style="left:683.5px;top:59px;width:2px;height:14px;background:repeating-linear-gradient(#d6d6d6 0 1px,transparent 1px 3px)"></div>
<svg style="left:690px;top:58.5px" width="16" height="16" viewBox="0 0 16 16"><circle cx="8" cy="7" r="6.5" fill="#5e8fcf" stroke="#3b659c" stroke-width="0.6"/><path d="M3 5c2 1 3 0 4 2s-1 3 0 4M10 2c0 2 2 2 3 4" stroke="#c5d9ef" stroke-width="0.9" fill="none"/><ellipse cx="4.8" cy="13" rx="2.6" ry="2.2" fill="#111"/><ellipse cx="11.2" cy="13" rx="2.6" ry="2.2" fill="#111"/><rect x="6" y="10" width="4" height="2.5" fill="#111"/><ellipse cx="4.8" cy="13.4" rx="1.3" ry="1" fill="#fff"/><ellipse cx="11.2" cy="13.4" rx="1.3" ry="1" fill="#fff"/></svg>
<div style="left:714px;top:59px;width:2px;height:14px;background:repeating-linear-gradient(#d6d6d6 0 1px,transparent 1px 3px)"></div>
<svg style="left:722px;top:58.5px" width="15" height="15" viewBox="0 0 16 16"><path d="M8 1C4 1 4 2.5 4 4v2h4.5v1H3C1.5 7 1 8.5 1 10s.8 3 2 3h1.5v-2.2C4.5 9.5 5.5 8.5 7 8.5h4c1.2 0 2-1 2-2V4c0-1.5-1.5-3-5-3z" fill="#3d74b5"/><path d="M8.5 15c4 0 4-1.5 4-3v-2H8v-1h5.5c1.5 0 2-1.5 2-3s-.8-3-2-3h-1v2.2c0 1.3-1 2.3-2.5 2.3h-4c-1.2 0-2 1-2 2v3c0 1.5 1.5 2.5 4.5 2.5z" fill="#f5cd3a"/><path d="M12 12.5l2.5 1.5-2.5 1.5" stroke="#333" stroke-width="0.7" fill="none"/></svg>
<div style="left:747px;top:59px;width:2px;height:14px;background:repeating-linear-gradient(#d6d6d6 0 1px,transparent 1px 3px)"></div>
<svg style="left:754.5px;top:58.5px" width="14.5" height="14.5" viewBox="0 0 16 16"><rect x="1.5" y="1" width="13" height="14" fill="#5b8ac0"/><rect x="1.5" y="1" width="3" height="14" fill="#1f3550"/><path d="M1.5 1h13v14h-13z" fill="none" stroke="#1f3550" stroke-width="0.7"/><text x="9.5" y="11" font-size="8" fill="#fff" text-anchor="middle" font-family="Liberation Sans">?</text></svg>
<div style="left:778.5px;top:59px;width:2px;height:14px;background:repeating-linear-gradient(#d6d6d6 0 1px,transparent 1px 3px)"></div>
<svg style="left:5.5px;top:96.5px" width="10" height="10" viewBox="0 0 16 16"><rect x="1.5" y="1.5" width="10" height="10" fill="none" stroke="#8a8a8a" stroke-width="1.2"/><circle cx="12.5" cy="12.5" r="2.6" fill="#fff" stroke="#5a9a5a" stroke-width="1.2"/></svg>
<svg style="left:21.5px;top:96.5px" width="10" height="10" viewBox="0 0 16 16"><path d="M2.5 8a5.5 5.5 0 0 1 9.5-3.8" fill="none" stroke="#3b7fcf" stroke-width="2.6"/><path d="M14.5 1.5v5h-5z" fill="#3b7fcf"/><path d="M13.5 8a5.5 5.5 0 0 1-9.5 3.8" fill="none" stroke="#3b7fcf" stroke-width="2.6"/><path d="M1.5 14.5v-5h5z" fill="#3b7fcf"/></svg>
<svg style="left:38.5px;top:96.5px" width="10" height="10" viewBox="0 0 16 16"><path d="M1 2h14l-5 6v7l-4-2v-5z" fill="#5886c0"/><rect x="1" y="1" width="14" height="3" fill="#e2d46a"/></svg>
<svg style="left:55px;top:96.5px" width="10" height="10" viewBox="0 0 16 16"><rect x="1.5" y="3" width="7" height="11" fill="#e4e4e4" stroke="#aaa" stroke-width="0.6"/><path d="M2 8h5M2 11h5" stroke="#f09030" stroke-width="1.4"/><path d="M10 15V7h-3l5-5 5 5h-3v8z" fill="#3a6fa8"/></svg>
<svg style="left:71px;top:96.5px" width="10" height="10" viewBox="0 0 16 16"><circle cx="8" cy="8" r="6.5" fill="#5b8fd0"/><rect x="7.2" y="6.5" width="1.6" height="5.5" fill="#fff"/><circle cx="8" cy="4.6" r="0.9" fill="#fff"/></svg>
<div style="left:0px;top:112px;width:1px;height:183px;background:#a8a8a8"></div>
<div style="left:1px;top:195px;width:190px;height:11px;background:#e5e5e5"></div>
<div style="left:1px;top:112px;width:190px;height:183px;overflow:hidden;position:absolute">
<svg style="position:absolute;left:12px;top:2px" width="10" height="10" viewBox="0 0 16 16"><path d="M8 1l2.1 4.6 5 .5-3.8 3.4 1.1 4.9L8 11.8l-4.4 2.6 1.1-4.9L.9 6.1l5-.5z" fill="#f7e04a" stroke="#c9a82a" stroke-width="0.7"/></svg>
<div class="t" style="left:26.4px;top:-2px;line-height:20px;font-size:7.6px;color:#1e1e1e">Favorites</div>
<svg style="position:absolute;left:12px;top:13.400000000000006px" width="10" height="10" viewBox="0 0 16 16"><rect x="2" y="1" width="12" height="14" fill="#e2e2e2" stroke="#b5b5b5" stroke-width="0.7"/><rect x="4.5" y="1" width="2" height="14" fill="#c9c9c9"/><path d="M9 1h3v6l-1.5-1.5L9 7z" fill="#5a88c4"/></svg>
<div class="t" style="left:26.4px;top:9.400000000000006px;line-height:20px;font-size:7.6px;color:#1e1e1e">Spatial Bookmarks</div>
<svg style="position:absolute;left:3.0999999999999996px;top:15.900000000000006px" width="3" height="5" viewBox="0 0 3 6"><path d="M0 0v6l3-3z" fill="#333"/></svg>
<svg style="position:absolute;left:12px;top:25px" width="10" height="10" viewBox="0 0 16 16"><rect x="1" y="2" width="14" height="12" fill="#9bd08a" stroke="#6aa35a" stroke-width="0.7"/><path d="M3 5l10 7" stroke="#3c8a3c" stroke-width="1.5"/><rect x="9" y="3" width="5" height="4" fill="#3c8a3c"/></svg>
<div class="t" style="left:26.4px;top:21px;line-height:20px;font-size:7.6px;color:#1e1e1e">Project Home</div>
<svg style="position:absolute;left:2.0999999999999996px;top:28.5px" width="5" height="3" viewBox="0 0 6 3"><path d="M0 0h6l-3 3z" fill="#333"/></svg>
<svg style="position:absolute;left:23px;top:37px" width="10" height="10" viewBox="0 0 16 16"><circle cx="7.3" cy="7.3" r="5.5" fill="none" stroke="#589632" stroke-width="2.2"/><path d="M9.5 9.5l5 5" stroke="#589632" stroke-width="2.6"/><circle cx="7.5" cy="7.5" r="1.6" fill="#ee7913"/></svg>
<div class="t" style="left:36.9px;top:33px;line-height:20px;font-size:7.6px;color:#1e1e1e">adelsheim tutorial.qgz</div>
<svg style="position:absolute;left:13.100000000000001px;top:40.5px" width="5" height="3" viewBox="0 0 6 3"><path d="M0 0h6l-3 3z" fill="#333"/></svg>
<svg style="position:absolute;left:34px;top:48.69999999999999px" width="10" height="10" viewBox="0 0 16 16"><rect x="2" y="2" width="12" height="12" fill="#fff"/><rect x="2" y="2" width="4" height="4" fill="#1a2d50"/><rect x="10" y="2" width="4" height="4" fill="#1a2d50"/><rect x="6" y="6" width="4" height="4" fill="#1a2d50"/><rect x="2" y="10" width="4" height="4" fill="#1a2d50"/><rect x="10" y="10" width="4" height="4" fill="#6a7fa5"/></svg>
<div class="t" style="left:47.4px;top:44.69999999999999px;line-height:20px;font-size:7.6px;color:#1e1e1e">Google Maps</div>
<svg style="position:absolute;left:23px;top:60px" width="10" height="10" viewBox="0 0 16 16"><path d="M2 13l5-5 3 3 4-9" fill="none" stroke="#888" stroke-width="0.9"/><circle cx="11" cy="11" r="3" fill="none" stroke="#888" stroke-width="0.9"/><path d="M2 3l3 3" stroke="#888" stroke-width="0.9"/><path d="M4 1.5h6" stroke="#888" stroke-width="0.9"/></svg>
<div class="t" style="left:36.9px;top:56px;line-height:20px;font-size:7.6px;color:#1e1e1e">flurstueck.shp</div>
<svg style="position:absolute;left:14.100000000000001px;top:62.5px" width="3" height="5" viewBox="0 0 3 6"><path d="M0 0v6l3-3z" fill="#333"/></svg>
<svg style="position:absolute;left:23px;top:72px" width="10" height="10" viewBox="0 0 16 16"><path d="M2 13l5-5 3 3 4-9" fill="none" stroke="#888" stroke-width="0.9"/><circle cx="11" cy="11" r="3" fill="none" stroke="#888" stroke-width="0.9"/><path d="M2 3l3 3" stroke="#888" stroke-width="0.9"/><path d="M4 1.5h6" stroke="#888" stroke-width="0.9"/></svg>
<div class="t" style="left:36.9px;top:68px;line-height:20px;font-size:7.6px;color:#1e1e1e">gebaeudeBauwerk.shp</div>
<svg style="position:absolute;left:14.100000000000001px;top:74.5px" width="3" height="5" viewBox="0 0 3 6"><path d="M0 0v6l3-3z" fill="#333"/></svg>
<svg style="position:absolute;left:23px;top:83.5px" width="10" height="10" viewBox="0 0 16 16"><ellipse cx="8" cy="3.5" rx="5.5" ry="2" fill="#f0f0f0" stroke="#999" stroke-width="0.8"/><path d="M2.5 3.5v9c0 1.1 2.5 2 5.5 2s5.5-.9 5.5-2v-9" fill="#f0f0f0" stroke="#999" stroke-width="0.8"/><path d="M2.5 8c0 1.1 2.5 2 5.5 2s5.5-.9 5.5-2" fill="none" stroke="#999" stroke-width="0.8"/></svg>
<div class="t" style="left:36.9px;top:79.5px;line-height:20px;font-size:7.6px;color:#1e1e1e">GOVDATA-Datenlizenz</div>
<svg style="position:absolute;left:14.100000000000001px;top:86.0px" width="3" height="5" viewBox="0 0 3 6"><path d="M0 0v6l3-3z" fill="#333"/></svg>
<svg style="position:absolute;left:12px;top:95.80000000000001px" width="10" height="10" viewBox="0 0 16 16"><rect x="1.5" y="2.5" width="13" height="11" fill="#f0f0f0" stroke="#999" stroke-width="0.8"/><path d="M5 9l3-3 3 3v3h-6z" fill="none" stroke="#444" stroke-width="0.9"/></svg>
<div class="t" style="left:26.4px;top:91.80000000000001px;line-height:20px;font-size:7.6px;color:#1e1e1e">Home</div>
<svg style="position:absolute;left:3.0999999999999996px;top:98.30000000000001px" width="3" height="5" viewBox="0 0 3 6"><path d="M0 0v6l3-3z" fill="#333"/></svg>
<svg style="position:absolute;left:12px;top:107px" width="10" height="10" viewBox="0 0 16 16"><path d="M1.5 3.5h5l1 1.5h7v9h-13z" fill="#f3f3f3" stroke="#a5a5a5" stroke-width="0.8"/></svg>
<div class="t" style="left:26.4px;top:103px;line-height:20px;font-size:7.6px;color:#1e1e1e">C:\</div>
<svg style="position:absolute;left:3.0999999999999996px;top:109.5px" width="3" height="5" viewBox="0 0 3 6"><path d="M0 0v6l3-3z" fill="#333"/></svg>
<svg style="position:absolute;left:12px;top:118.69999999999999px" width="10" height="10" viewBox="0 0 16 16"><path d="M1.5 3.5h5l1 1.5h7v9h-13z" fill="#f3f3f3" stroke="#a5a5a5" stroke-width="0.8"/></svg>
<div class="t" style="left:26.4px;top:114.69999999999999px;line-height:20px;font-size:7.6px;color:#1e1e1e">D:\ (DriverCD)</div>
<svg style="position:absolute;left:3.0999999999999996px;top:121.19999999999999px" width="3" height="5" viewBox="0 0 3 6"><path d="M0 0v6l3-3z" fill="#333"/></svg>
<svg style="position:absolute;left:12px;top:130.4px" width="10" height="10" viewBox="0 0 16 16"><path d="M1 7l7-3 7 3v6l-7 3-7-3z" fill="#e9c12f" stroke="#8a6d10" stroke-width="0.6"/><circle cx="8" cy="5.5" r="4.5" fill="#4d7fc0"/><path d="M5 4l3 2 2-3" stroke="#cde" stroke-width="1" fill="none"/><path d="M1 7l7 3 7-3" fill="none" stroke="#8a6d10" stroke-width="0.6"/><rect x="9.5" y="9.5" width="5.5" height="5.5" fill="#f7dd6a" stroke="#d8b62a" stroke-width="0.6"/></svg>
<div class="t" style="left:26.4px;top:126.4px;line-height:20px;font-size:7.6px;color:#1e1e1e">GeoPackage</div>
<svg style="position:absolute;left:12px;top:142.8px" width="10" height="10" viewBox="0 0 16 16"><path d="M15 1C9 2 4 7 2 15c3-4 8-7 13-14z" fill="#3d6aa8"/><path d="M2 15c2-5 6-9 12-13" stroke="#9ab8de" stroke-width="0.5" fill="none"/></svg>
<div class="t" style="left:26.4px;top:138.8px;line-height:20px;font-size:7.6px;color:#1e1e1e">SpatiaLite</div>
<svg style="position:absolute;left:12px;top:154px" width="10" height="10" viewBox="0 0 16 16"><path d="M3 2c3-1 8-1 10 0 2 2 1 6-1 8v3c0 2-3 2-3 0v-2h-2v2c0 2-3 2-3 0v-3c-2-2-3-6-1-8z" fill="#3d6aa8" stroke="#24497d" stroke-width="0.6"/><circle cx="6" cy="5" r="0.9" fill="#fff"/></svg>
<div class="t" style="left:26.4px;top:150px;line-height:20px;font-size:7.6px;color:#1e1e1e">PostgreSQL</div>
<svg style="position:absolute;left:12px;top:165.3px" width="10" height="10" viewBox="0 0 16 16"><rect x="1.5" y="1.5" width="13" height="13" fill="none" stroke="#7aa0d0" stroke-width="0.8" stroke-dasharray="1 1"/><rect x="4" y="4" width="8" height="8" fill="#5d8fd0"/></svg>
<div class="t" style="left:26.4px;top:161.3px;line-height:20px;font-size:7.6px;color:#1e1e1e">SAP HANA</div>
<svg style="position:absolute;left:12px;top:177.5px" width="10" height="10" viewBox="0 0 16 16"><rect x="2" y="4" width="11" height="10" fill="#ddd" stroke="#999" stroke-width="0.6"/></svg>
<div class="t" style="left:26.4px;top:173.5px;line-height:20px;font-size:7.6px;color:#1e1e1e">STAC</div>
</div>
<svg style="left:5.5px;top:316.5px" width="10" height="10" viewBox="0 0 16 16"><path d="M15.5 1L8 8.5" stroke="#d9a520" stroke-width="2.6"/><path d="M1 13c1.5-4 4.5-6 7-5 2 1 2 3 0 5-2 1.5-5 2-7 0z" fill="#e2533a"/><path d="M2 11.5c2-2 4-3 6-2" stroke="#f5d35a" stroke-width="1.6" fill="none"/><path d="M6 8l3 3" stroke="#c84" stroke-width="1"/></svg>
<svg style="left:21.5px;top:316.5px" width="10" height="10" viewBox="0 0 16 16"><path d="M3 15V6l3.5-4 3.5 4" fill="none" stroke="#8f8f8f" stroke-width="1.6"/><path d="M5 10h4" stroke="#8f8f8f" stroke-width="1.2"/><rect x="8.5" y="5" width="6" height="10" fill="#d9d9d9" stroke="#8f8f8f" stroke-width="0.8"/><rect x="9.5" y="10" width="5.5" height="5.5" fill="#4caf50" stroke="#2f7f33" stroke-width="0.6"/></svg>
<svg style="left:38.5px;top:316.5px" width="10" height="10" viewBox="0 0 16 16"><path d="M0.5 8C3 3.5 11 3.5 13.5 8 11 12.5 3 12.5 0.5 8z" fill="#dfe6ee" stroke="#8ea2ba" stroke-width="0.8"/><circle cx="7" cy="8" r="3" fill="#3e6ca8"/><circle cx="7" cy="8" r="1.2" fill="#111"/><path d="M11 12.5h5l-2.5 3z" fill="#333"/></svg>
<svg style="left:55px;top:316.5px" width="10" height="10" viewBox="0 0 16 16"><path d="M0.5 3h13l-4.5 6v6.5l-4-2v-4.5z" fill="#5586c4"/><rect x="0.5" y="1" width="13" height="3.2" rx="0.8" fill="#e6d45c"/><path d="M11.5 12.5h4.5l-2.25 3z" fill="#333"/></svg>
<svg style="left:71px;top:316.5px" width="10" height="10" viewBox="0 0 16 16"><path d="M9.5 2.5C7 1 2 2 2.5 5c.3 1.6 2 2.2 3.5 2.2C4 7.2 1.5 8 1.8 10.5 2.2 13.5 7.5 14 10 12" fill="none" stroke="#5b4a86" stroke-width="1.6"/><rect x="9.5" y="10" width="6" height="5.5" fill="#fff" stroke="#555" stroke-width="1"/><path d="M11 11.5v3M12.5 11.5v3M14 11.5v3" stroke="#777" stroke-width="0.6"/></svg>
<div style="left:0px;top:332px;width:1px;height:180px;background:#a8a8a8"></div>
<div style="left:1px;top:332px;width:190px;height:11px;background:#0078d7"></div>
<svg style="left:15.5px;top:333.5px" width="9" height="9" viewBox="0 0 9 9"><rect x="0.5" y="0.5" width="8" height="8" fill="#fff" stroke="#c0c0c0" stroke-width="0.8"/><path d="M2 4.6l1.8 2 3.4-4.6" fill="none" stroke="#111" stroke-width="1.2"/></svg>
<svg style="left:15.5px;top:345px" width="9" height="9" viewBox="0 0 9 9"><rect x="0.5" y="0.5" width="8" height="8" fill="#fff" stroke="#c0c0c0" stroke-width="0.8"/></svg>
<svg style="left:15.5px;top:357px" width="9" height="9" viewBox="0 0 9 9"><rect x="0.5" y="0.5" width="8" height="8" fill="#fff" stroke="#c0c0c0" stroke-width="0.8"/><path d="M2 4.6l1.8 2 3.4-4.6" fill="none" stroke="#111" stroke-width="1.2"/></svg>
<svg style="left:30px;top:334px" width="8" height="8" viewBox="0 0 8 8"><circle cx="4" cy="4" r="2.6" fill="#d42a2a" stroke="#8a1a1a" stroke-width="0.6"/></svg>
<div style="left:29px;top:344.5px;width:9.5px;height:10px;background:#7ebf69;border:0.8px solid #58904a;box-sizing:border-box"></div>
<svg style="left:29.5px;top:356.5px" width="9" height="9" viewBox="0 0 16 16"><rect x="2" y="2" width="12" height="12" fill="#fff"/><rect x="2" y="2" width="4" height="4" fill="#1a2d50"/><rect x="10" y="2" width="4" height="4" fill="#1a2d50"/><rect x="6" y="6" width="4" height="4" fill="#1a2d50"/><rect x="2" y="10" width="4" height="4" fill="#1a2d50"/><rect x="10" y="10" width="4" height="4" fill="#6a7fa5"/></svg>
<svg style="left:5px;top:360px" width="5" height="3" viewBox="0 0 6 3"><path d="M0 0h6l-3 3z" fill="#555"/></svg>
<div class="t" style="left:43px;top:328.70px;line-height:20px;font-size:7.6px;color:#fff;font-weight:bold">grenzpunkt</div>
<div class="t" style="left:43px;top:340.70px;line-height:20px;font-size:7.6px;color:#7a7a7a;font-style:italic">flurstueck</div>
<div class="t" style="left:43px;top:352.20px;line-height:20px;font-size:7.6px;color:#111;font-weight:bold">Google Maps</div>
<div class="t" style="left:224.5px;top:79.5px;line-height:20px;font-size:6.45px;color:#222"><b>Layer Exported:</b> <span id="succ" style="margin-left:1.5px">Successfully</span> saved vector layer to <span style="color:#2a8a2a;text-decoration:underline">C:\Users\User\Downloads\lines.geojson</span></div>
<div class="t" style="left:940px;top:79.20px;line-height:20px;font-size:6.8px;color:#333;font-style:italic">2 more</div>
<svg style="left:974px;top:83px" width="11" height="11" viewBox="0 0 11 11"><circle cx="5.5" cy="5.5" r="5.5" fill="#222"/><path d="M3.3 3.3l4.4 4.4M7.7 3.3l-4.4 4.4" stroke="#fff" stroke-width="1.5"/></svg>
<svg style="left:987.8px;top:87.15px" width="5.4" height="2.7" viewBox="0 0 6 3"><path d="M0 0h6l-3 3z" fill="#444"/></svg>
<div style="left:3px;top:515px;width:129px;height:13px;background:#fff;border:1px solid #b9b9b9;box-sizing:border-box"></div>
<svg style="left:8px;top:517px" width="9" height="9" viewBox="0 0 9 9"><circle cx="3.8" cy="3.8" r="2.8" fill="none" stroke="#777" stroke-width="0.9"/><path d="M5.8 5.8l2.5 2.5" stroke="#777" stroke-width="1"/></svg>
<div class="t" style="left:21px;top:512.50px;line-height:20px;font-size:6.8px;color:#888;">Type to locate (Ctrl+K)</div>
<div class="t" style="left:138px;top:512.70px;line-height:20px;font-size:7.1px;color:#222;">1 legend entry removed.</div>
<div class="t" style="left:469px;top:512.70px;line-height:20px;font-size:7px;color:#222;">Coordinate</div>
<div style="left:505.5px;top:515px;width:78px;height:14px;background:#fff;border:1px solid #b9b9b9;box-sizing:border-box"></div>
<div class="t" style="left:510px;top:512.70px;line-height:20px;font-size:7px;color:#222;">525007.6, 5472970.9</div>
<svg style="left:586px;top:515px" width="12" height="13" viewBox="0 0 12 13"><ellipse cx="6" cy="7" rx="4" ry="4.5" fill="none" stroke="#222" stroke-width="1.2"/><path d="M2 4l8 6M10 4l-8 6" stroke="#222" stroke-width="1.1"/></svg>
<div class="t" style="left:605px;top:512.70px;line-height:20px;font-size:7px;color:#222;">Scale</div>
<div style="left:624px;top:515px;width:52px;height:14px;background:#fff;border:1px solid #b9b9b9;box-sizing:border-box"></div>
<div style="left:663px;top:516px;width:1px;height:12px;background:#ccc"></div>
<svg style="left:666.0px;top:520.75px" width="5.0" height="2.5" viewBox="0 0 6 3"><path d="M0 0h6l-3 3z" fill="#444"/></svg>
<div class="t" style="left:627px;top:512.70px;line-height:20px;font-size:7px;color:#222;">1:3147</div>
<svg style="left:680px;top:516px" width="9" height="11" viewBox="0 0 9 11"><path d="M2 5V3.5a2.5 2.5 0 0 1 5 0V5" fill="none" stroke="#777" stroke-width="1.2"/><rect x="1" y="5" width="7" height="5.5" fill="#777"/></svg>
<div class="t" style="left:695px;top:512.70px;line-height:20px;font-size:7px;color:#222;">Magnifier</div>
<div style="left:727px;top:515px;width:48px;height:14px;background:#fff;border:1px solid #b9b9b9;box-sizing:border-box"></div>
<div class="t" style="left:730px;top:512.70px;line-height:20px;font-size:7px;color:#222;">100%</div>
<svg style="left:768px;top:516px" width="6" height="12" viewBox="0 0 6 12"><path d="M0.5 4.5L3 1.5 5.5 4.5M0.5 7.5L3 10.5 5.5 7.5" fill="none" stroke="#333" stroke-width="0.9"/></svg>
<div class="t" style="left:785px;top:512.70px;line-height:20px;font-size:7px;color:#222;">Rotation</div>
<div style="left:818px;top:515px;width:50px;height:14px;background:#fff;border:1px solid #b9b9b9;box-sizing:border-box"></div>
<div class="t" style="left:821px;top:512.70px;line-height:20px;font-size:7px;color:#222;">0.0 °</div>
<svg style="left:861px;top:516px" width="6" height="12" viewBox="0 0 6 12"><path d="M0.5 4.5L3 1.5 5.5 4.5M0.5 7.5L3 10.5 5.5 7.5" fill="none" stroke="#333" stroke-width="0.9"/></svg>
<svg style="left:874px;top:517.5px" width="9" height="9" viewBox="0 0 9 9"><rect x="0.5" y="0.5" width="8" height="8" fill="#fff" stroke="#c0c0c0" stroke-width="0.8"/><path d="M2 4.6l1.8 2 3.4-4.6" fill="none" stroke="#111" stroke-width="1.2"/></svg>
<div class="t" style="left:886px;top:512.70px;line-height:20px;font-size:7px;color:#222;">Render</div>
<svg style="left:919px;top:517px" width="10" height="9" viewBox="0 0 10 9"><ellipse cx="5" cy="4.5" rx="4.5" ry="4" fill="#888"/><path d="M1 3h8M0.5 5.5h9M5 0.5v8" stroke="#ddd" stroke-width="0.6"/></svg>
<div class="t" style="left:930px;top:512.70px;line-height:20px;font-size:7px;color:#222;">EPSG:25832</div>
<svg style="left:975px;top:516px" width="12" height="11" viewBox="0 0 12 11"><path d="M6 1C3 1 1 2.8 1 5s1.3 3 2.5 3.6L3 10.5l3-1.8c3 0 5-1.6 5-3.7S9 1 6 1z" fill="#444"/><circle cx="3.8" cy="5" r="0.7" fill="#fff"/><circle cx="6" cy="5" r="0.7" fill="#fff"/><circle cx="8.2" cy="5" r="0.7" fill="#fff"/></svg>
<div style="left:0px;top:530px;width:1000px;height:2px;background:#ddd6cc"></div>
<div style="left:84px;top:18px;width:151px;height:321px;background:#fff;border:1px solid #c8c8c8;box-sizing:border-box;box-shadow:1px 1px 2px rgba(0,0,0,.25)"></div>
<div style="left:85px;top:275px;width:149px;height:15px;background:#0078d7"></div>
<div class="t" style="left:101.7px;top:17.20px;line-height:20px;font-size:7.5px;color:#222;"><u>Z</u>oom to Layer(s)</div>
<div class="t" style="left:101.7px;top:32.70px;line-height:20px;font-size:7.5px;color:#999;">Zoom to <u>S</u>election</div>
<div class="t" style="left:101.7px;top:48.10px;line-height:20px;font-size:7.5px;color:#222;">Show in <u>O</u>verview</div>
<div class="t" style="left:101.7px;top:63.70px;line-height:20px;font-size:7.5px;color:#222;">Show Feature <u>C</u>ount</div>
<div class="t" style="left:101.7px;top:79.30px;line-height:20px;font-size:7.5px;color:#222;">Show <u>L</u>abels</div>
<div class="t" style="left:101.7px;top:95.30px;line-height:20px;font-size:7.5px;color:#222;">Copy Layer</div>
<div class="t" style="left:101.7px;top:110.70px;line-height:20px;font-size:7.5px;color:#222;">Re<u>n</u>ame Layer</div>
<div class="t" style="left:101.7px;top:128.10px;line-height:20px;font-size:7.5px;color:#222;"><u>D</u>uplicate Layer</div>
<div class="t" style="left:101.7px;top:143.70px;line-height:20px;font-size:7.5px;color:#222;"><u>R</u>emove Layer...</div>
<div class="t" style="left:101.7px;top:160.10px;line-height:20px;font-size:7.5px;color:#222;">Move to <u>B</u>ottom</div>
<div class="t" style="left:101.7px;top:177.20px;line-height:20px;font-size:7.5px;color:#222;">Open <u>A</u>ttribute Table</div>
<div class="t" style="left:101.7px;top:192.70px;line-height:20px;font-size:7.5px;color:#222;">Toggle <u>E</u>diting</div>
<div class="t" style="left:101.7px;top:208.70px;line-height:20px;font-size:7.5px;color:#222;"><u>F</u>ilter...</div>
<div class="t" style="left:101.7px;top:224.70px;line-height:20px;font-size:7.5px;color:#222;">C<u>h</u>ange Data Source...</div>
<div class="t" style="left:101.7px;top:240.70px;line-height:20px;font-size:7.5px;color:#222;">Set Layer Scale <u>V</u>isibility...</div>
<div class="t" style="left:101.7px;top:256.20px;line-height:20px;font-size:7.5px;color:#222;">Layer CRS</div>
<div class="t" style="left:101.7px;top:273.70px;line-height:20px;font-size:7.5px;color:#fff;">Export</div>
<div class="t" style="left:101.7px;top:290.50px;line-height:20px;font-size:7.5px;color:#222;">Styles</div>
<div class="t" style="left:101.7px;top:305.70px;line-height:20px;font-size:7.5px;color:#222;">Add Layer Notes...</div>
<div class="t" style="left:101.7px;top:321.70px;line-height:20px;font-size:7.5px;color:#222;"><u>P</u>roperties...</div>
<svg style="left:88px;top:21.5px" width="10" height="10" viewBox="0 0 16 16"><circle cx="9.5" cy="6.5" r="5" fill="#f6f6f6" stroke="#777" stroke-width="1.1"/><path d="M1.5 14.5l4.5-4.5" stroke="#222" stroke-width="2.6"/><path d="M1.8 14.2l3.6-3.6" stroke="#e5c334" stroke-width="1.3"/></svg>
<svg style="left:88px;top:37px" width="10" height="10" viewBox="0 0 16 16"><circle cx="9.5" cy="6.5" r="5" fill="#f6f6f6" stroke="#ccc" stroke-width="1.1"/><path d="M1.5 14.5l4.5-4.5" stroke="#ccc" stroke-width="2.6"/><path d="M1.8 14.2l3.6-3.6" stroke="#e3e3e3" stroke-width="1.3"/></svg>
<svg style="left:88px;top:52.4px" width="10" height="10" viewBox="0 0 16 16"><path d="M0.5 2.5h15" stroke="#111" stroke-width="1.3"/><path d="M1 2.5h5.8v2.5c0 1.6-1.2 2.5-2.9 2.5S1 6.6 1 5z" fill="#fff" stroke="#111" stroke-width="1.5"/><path d="M9.2 2.5H15v2.5c0 1.6-1.2 2.5-2.9 2.5S9.2 6.6 9.2 5z" fill="#fff" stroke="#111" stroke-width="1.5"/><rect x="8" y="10" width="5.5" height="5.5" fill="#fff" stroke="#3c9a4a" stroke-width="1.1"/><path d="M10.75 11.3v3M9.3 12.75h3" stroke="#3c9a4a" stroke-width="1"/></svg>
<svg style="left:88px;top:68px" width="10" height="10" viewBox="0 0 16 16"><rect x="1.5" y="1.5" width="13" height="13" fill="#fff" stroke="#c8c8c8" stroke-width="0.9"/></svg>
<svg style="left:88px;top:83.6px" width="10" height="10" viewBox="0 0 16 16"><path d="M1 8l2.5-3h11.5v6h-11.5z" fill="#f1d846" stroke="#cfae2a" stroke-width="0.6"/><text x="9" y="9.6" font-size="3.8" fill="#555" text-anchor="middle" font-family="Liberation Sans">abc</text></svg>
<svg style="left:88px;top:132.4px" width="10" height="10" viewBox="0 0 16 16"><rect x="1.5" y="1.5" width="11" height="12" fill="#eee" stroke="#888" stroke-width="0.8"/><rect x="3" y="3" width="9" height="9" fill="#fff" stroke="#aaa" stroke-width="0.6"/><rect x="9" y="9" width="6" height="6" fill="#f0d040"/></svg>
<svg style="left:88px;top:148px" width="10" height="10" viewBox="0 0 16 16"><rect x="1.5" y="1.5" width="11" height="12" fill="#eee" stroke="#888" stroke-width="0.8"/><rect x="3" y="3" width="9" height="9" fill="#fff" stroke="#aaa" stroke-width="0.6"/><circle cx="12" cy="12.5" r="3" fill="#e04444"/><path d="M10.5 12.5h3" stroke="#fff" stroke-width="0.9"/></svg>
<svg style="left:88px;top:181.5px" width="10" height="10" viewBox="0 0 16 16"><rect x="1.5" y="1.5" width="13" height="13" fill="#bcd2ee" stroke="#8eb0dc" stroke-width="0.7"/><path d="M1.5 5h13M7 5v9.5" stroke="#fff" stroke-width="1"/></svg>
<svg style="left:88px;top:197px" width="10" height="10" viewBox="0 0 16 16"><path d="M12 1.5l2.5 2.5-9 10-3.5 1 1-3.5z" fill="#e9cd4a" stroke="#b08f2a" stroke-width="0.7"/></svg>
<svg style="left:227.35px;top:263.0px" width="2.5" height="5.0" viewBox="0 0 3 6"><path d="M0 0v6l3-3z" fill="#444"/></svg>
<svg style="left:227.35px;top:280.5px" width="2.5" height="5.0" viewBox="0 0 3 6"><path d="M0 0v6l3-3z" fill="#fff"/></svg>
<svg style="left:227.35px;top:297.3px" width="2.5" height="5.0" viewBox="0 0 3 6"><path d="M0 0v6l3-3z" fill="#444"/></svg>
<div style="left:90px;top:128px;width:140px;height:1px;background:#dcdcdc"></div>
<div style="left:90px;top:177px;width:140px;height:1px;background:#dcdcdc"></div>
<div style="left:235px;top:273px;width:143px;height:64px;background:#fff;border:1px solid #c8c8c8;box-sizing:border-box;box-shadow:1px 1px 2px rgba(0,0,0,.25)"></div>
<div style="left:235px;top:273px;width:143px;height:19.5px;background:#0078d7;border:2.4px solid #d51a2a;box-sizing:border-box"></div>
<div class="t" style="left:252.2px;top:273.70px;line-height:20px;font-size:7.5px;color:#fff;">Save Features <u>A</u>s...</div>
<div class="t" style="left:252.2px;top:289.30px;line-height:20px;font-size:7.5px;color:#999;">Save <u>S</u>elected Features As...</div>
<div class="t" style="left:252.2px;top:305.00px;line-height:20px;font-size:7.5px;color:#222;">Save as Layer <u>D</u>efinition File...</div>
<div class="t" style="left:252.2px;top:320.50px;line-height:20px;font-size:7.5px;color:#222;">Save as <u>Q</u>GIS Layer Style File...</div>
</body></html>
